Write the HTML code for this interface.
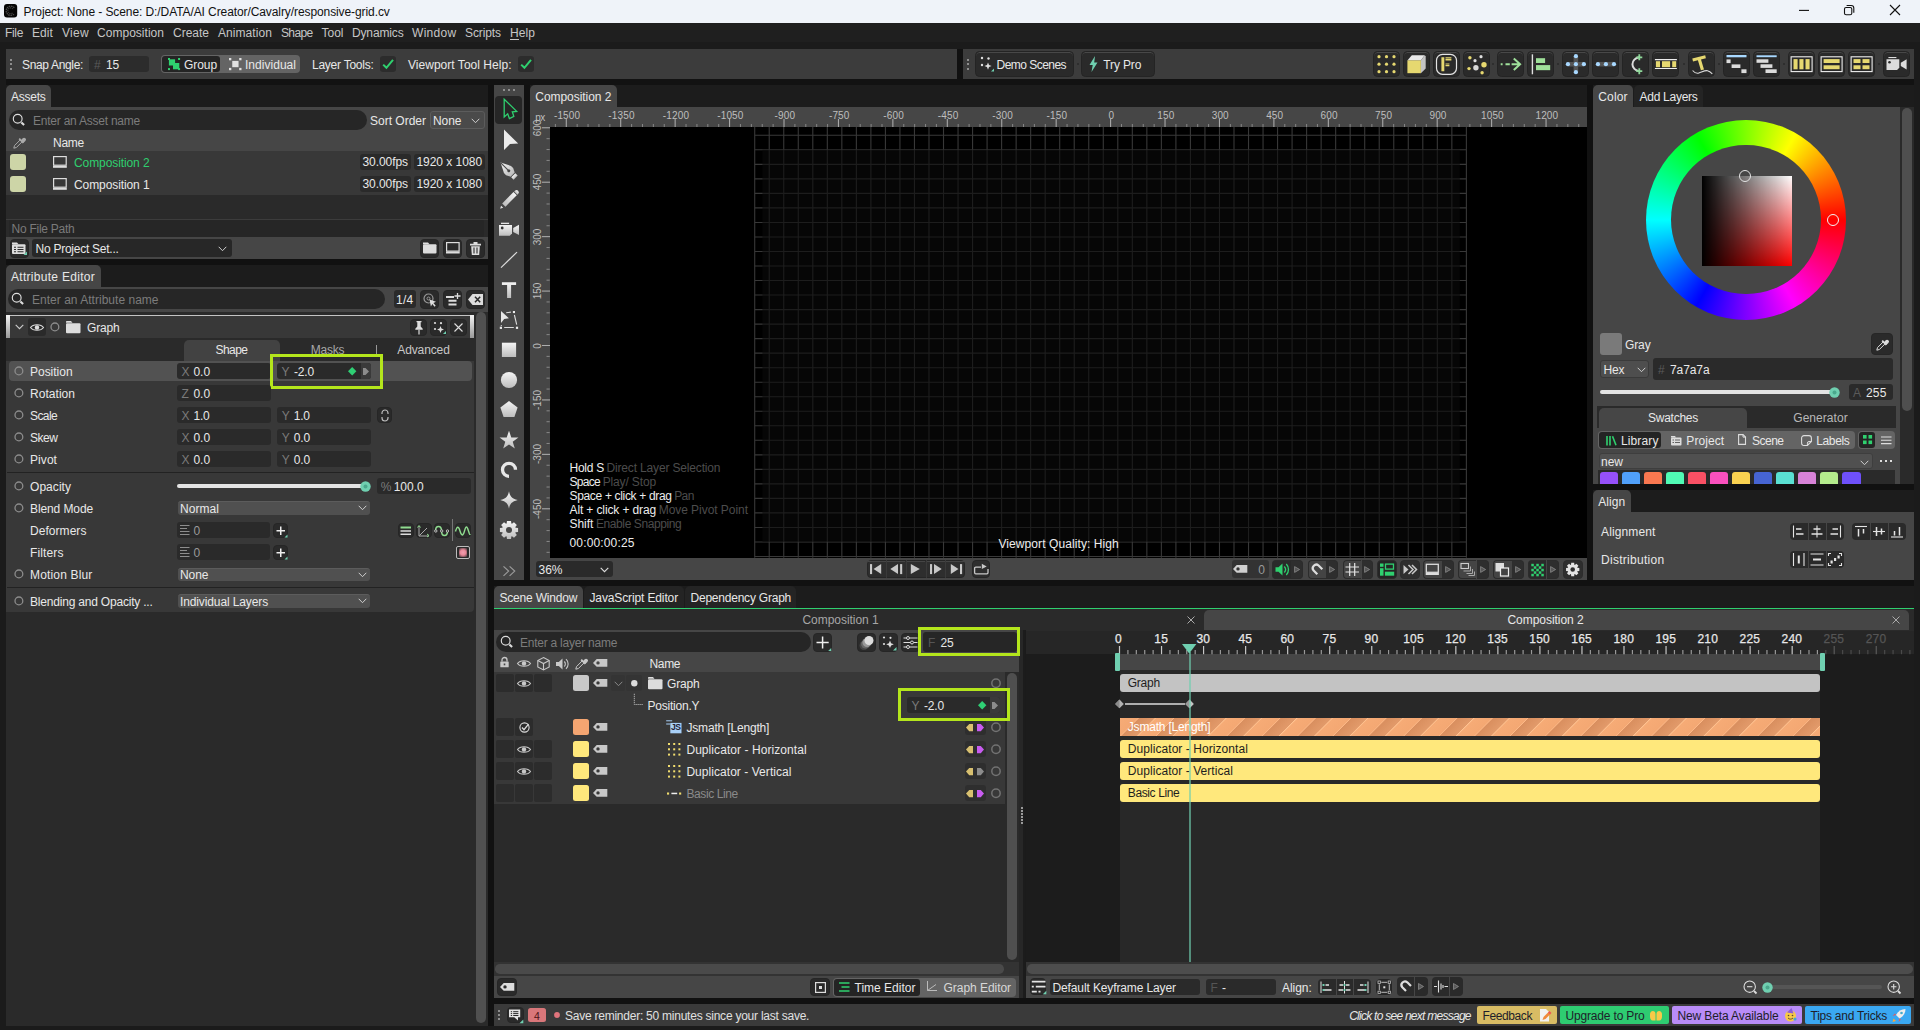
<!DOCTYPE html>
<html lang="en"><head><meta charset="utf-8"><title>Cavalry - responsive-grid.cv</title>
<style>
html,body{margin:0;padding:0}
body{width:1920px;height:1030px;overflow:hidden;position:relative;background:#1b1b1b;font-family:"Liberation Sans",Arial,sans-serif;font-size:12px;color:#e4e4e4}
div,svg{position:absolute;box-sizing:border-box}
svg{overflow:visible}
.t{white-space:nowrap}
</style></head><body>
<div style="left:0px;top:0px;width:1920px;height:22.7px;background:#eff3f9;"></div>
<svg style="left:3.6px;top:4.2px;" width="13.2" height="13.4" viewBox="0 0 13.2 13.4"><rect x="0" y="0" width="13.200" height="13.400" rx="3" fill="#050505"/><path d="M10.300 3.800A4.600 4.600 0 1 0 10.300 9.800" fill="none" stroke="#4a4a4a" stroke-width="1.300" stroke-dasharray="1.500 .700"/><path d="M9 5A2.900 2.900 0 1 0 9 8.600" fill="none" stroke="#3c3c3c" stroke-width="1.100" stroke-dasharray="1.300 .700"/></svg>
<div class="t" style="left:23.5px;top:1.5px;line-height:20px;color:#111;letter-spacing:-0.09px;">Project: None - Scene: D:/DATA/AI Creator/Cavalry/responsive-grid.cv</div>
<svg style="left:1790px;top:0px;" width="120" height="23" viewBox="0 0 120 23"><path d="M9 10.400h10" stroke="#111" stroke-width="1.100"/><rect x="54.500" y="7.500" width="7.300" height="7.300" rx="1.600" fill="none" stroke="#111" stroke-width="1.100"/><path d="M56.600 5.500h4.600a2.600 2.600 0 0 1 2.600 2.600v4.700" fill="none" stroke="#111" stroke-width="1.100"/><path d="M100 5l10 10M110 5l-10 10" stroke="#111" stroke-width="1.100"/></svg>
<div style="left:0px;top:22.7px;width:1920px;height:19.8px;background:#1f1f1f;"></div>
<div class="t" style="left:5px;top:23px;line-height:20px;color:#c6c6c6;letter-spacing:-0.34px;">File</div>
<div class="t" style="left:32px;top:23px;line-height:20px;color:#c6c6c6;letter-spacing:0.08px;">Edit</div>
<div class="t" style="left:62px;top:23px;line-height:20px;color:#c6c6c6;letter-spacing:0.3px;">View</div>
<div class="t" style="left:97px;top:23px;line-height:20px;color:#c6c6c6;letter-spacing:0.03px;">Composition</div>
<div class="t" style="left:173px;top:23px;line-height:20px;color:#c6c6c6;">Create</div>
<div class="t" style="left:218px;top:23px;line-height:20px;color:#c6c6c6;letter-spacing:0.07px;">Animation</div>
<div class="t" style="left:281px;top:23px;line-height:20px;color:#c6c6c6;letter-spacing:-0.64px;">Shape</div>
<div class="t" style="left:321.5px;top:23px;line-height:20px;color:#c6c6c6;">Tool</div>
<div class="t" style="left:352px;top:23px;line-height:20px;color:#c6c6c6;letter-spacing:-0.15px;">Dynamics</div>
<div class="t" style="left:412px;top:23px;line-height:20px;color:#c6c6c6;letter-spacing:0.3px;">Window</div>
<div class="t" style="left:465px;top:23px;line-height:20px;color:#c6c6c6;letter-spacing:-0.1px;">Scripts</div>
<div class="t" style="left:510px;top:23px;line-height:20px;color:#c6c6c6;letter-spacing:0.08px;">Help</div>
<div style="left:510px;top:39px;width:8.5px;height:1px;background:#c6c6c6;"></div>
<div style="left:6px;top:49px;width:951px;height:30px;background:#3c3c3c;"></div>
<div style="left:10px;top:58.7px;width:2px;height:2px;background:#8e8e8e;"></div>
<div style="left:10px;top:63.2px;width:2px;height:2px;background:#8e8e8e;"></div>
<div style="left:10px;top:67.7px;width:2px;height:2px;background:#8e8e8e;"></div>
<div class="t" style="left:22px;top:54.8px;line-height:20px;color:#e8e8e8;letter-spacing:-0.34px;">Snap Angle:</div>
<div style="left:89px;top:56px;width:59.5px;height:16px;background:#2c2c2c;border-radius:3px;"></div>
<div class="t" style="left:94px;top:54.8px;line-height:20px;color:#5a5a5a;letter-spacing:-0.67px;">#</div>
<div class="t" style="left:106px;top:54.8px;line-height:20px;color:#e8e8e8;letter-spacing:-0.17px;">15</div>
<div style="left:161px;top:55px;width:139px;height:18px;background:#646464;border-radius:4px;"></div>
<div style="left:162px;top:56px;width:58px;height:16px;background:#242424;border-radius:3px;"></div>
<svg style="left:167.9px;top:57.9px;" width="12.2" height="12.2" viewBox="0 0 12.2 12.2"><g fill="#2fd16f"><rect x="0.900" y="1.300" width="6.200" height="6.200"/><rect x="5" y="5" width="6.300" height="6.300"/><rect x="0" y="0" width="2" height="2"/><rect x="10.100" y="0" width="2" height="2"/><rect x="0" y="10.100" width="2" height="2"/><rect x="10.100" y="10.100" width="2" height="2"/></g></svg>
<div class="t" style="left:184px;top:54.8px;line-height:20px;color:#e8e8e8;letter-spacing:-0.07px;">Group</div>
<svg style="left:228.75px;top:57.9px;" width="12.5" height="12.2" viewBox="0 0 12.5 12.2"><g fill="#e0e0e0"><rect x="3.250" y="2.900" width="6.300" height="6.300"/><rect x="0" y="0" width="2.300" height="2.300"/><rect x="10.200" y="0" width="2.300" height="2.300"/><rect x="0" y="9.900" width="2.300" height="2.300"/><rect x="10.200" y="9.900" width="2.300" height="2.300"/></g></svg>
<div class="t" style="left:245px;top:54.8px;line-height:20px;color:#e8e8e8;letter-spacing:0.03px;">Individual</div>
<div class="t" style="left:312px;top:54.8px;line-height:20px;color:#e8e8e8;letter-spacing:-0.25px;">Layer Tools:</div>
<div style="left:380px;top:56px;width:16px;height:16px;background:#2c2c2c;border-radius:3px;"></div>
<svg style="left:380px;top:56px;" width="16" height="16" viewBox="0 0 16 16"><path d="M3.2 8.6l3.2 3.2 6.6-8" fill="none" stroke="#2fd16f" stroke-width="2"/></svg>
<div class="t" style="left:408px;top:54.8px;line-height:20px;color:#e8e8e8;letter-spacing:0.03px;">Viewport Tool Help:</div>
<div style="left:517.5px;top:56px;width:16px;height:16px;background:#2c2c2c;border-radius:3px;"></div>
<svg style="left:517.5px;top:56px;" width="16" height="16" viewBox="0 0 16 16"><path d="M3.2 8.6l3.2 3.2 6.6-8" fill="none" stroke="#2fd16f" stroke-width="2"/></svg>
<div style="left:957px;top:49px;width:6px;height:30px;background:#111;"></div>
<div style="left:963px;top:49px;width:951px;height:30px;background:#3c3c3c;"></div>
<div style="left:967px;top:58.7px;width:2px;height:2px;background:#8e8e8e;"></div>
<div style="left:967px;top:63.2px;width:2px;height:2px;background:#8e8e8e;"></div>
<div style="left:967px;top:67.7px;width:2px;height:2px;background:#8e8e8e;"></div>
<div style="left:974.5px;top:50.8px;width:99.5px;height:26.7px;background:#2a2a2a;border-radius:4.5px;border:1px solid #242424;box-shadow:inset 0 1px 0 #484848;"></div>
<svg style="left:980px;top:56px;" width="14" height="16" viewBox="0 0 14 16"><g fill="#e0e0e0"><circle cx="2" cy="2" r="1.2"/><circle cx="8.5" cy="2.5" r="1.2"/><circle cx="2" cy="9" r="1.2"/><path d="M8 6.5l1 2.6 2.6 1-2.6 1-1 2.6-1-2.6-2.6-1 2.6-1z"/></g><path d="M14 12.5v3h-3z" fill="#6fcfb0"/></svg>
<div class="t" style="left:996.5px;top:54.8px;line-height:20px;color:#e8e8e8;letter-spacing:-0.53px;">Demo Scenes</div>
<div style="left:1076.5px;top:63px;width:2px;height:2px;background:#2a2a2a;border-radius:1px;"></div>
<div style="left:1081.3px;top:50.8px;width:74px;height:26.7px;background:#2a2a2a;border-radius:4.5px;border:1px solid #242424;box-shadow:inset 0 1px 0 #484848;"></div>
<svg style="left:1089px;top:56px;" width="9" height="16" viewBox="0 0 9 16"><path d="M6 0L0.5 9h3.2L2.5 16 8.5 6.5H5.2z" fill="#6fcfb0"/></svg>
<div class="t" style="left:1103.3px;top:54.8px;line-height:20px;color:#e8e8e8;letter-spacing:-0.13px;">Try Pro</div>
<div style="left:1372.5px;top:50.8px;width:27px;height:26.7px;background:#2a2a2a;border-radius:4.5px;border:1px solid #242424;box-shadow:inset 0 1px 0 #484848;"></div>
<svg style="left:1372.5px;top:50.8px;" width="27" height="26.7" viewBox="0 0 27 26.7"><circle cx="6" cy="5.7" r="1.600" fill="#e6d870"/><circle cx="6" cy="13.2" r="1.600" fill="#e6d870"/><circle cx="6" cy="20.7" r="1.600" fill="#e6d870"/><circle cx="13.5" cy="5.7" r="1.600" fill="#e6d870"/><circle cx="13.5" cy="13.2" r="1.600" fill="#e6d870"/><circle cx="13.5" cy="20.7" r="1.600" fill="#e6d870"/><circle cx="21" cy="5.7" r="1.600" fill="#e6d870"/><circle cx="21" cy="13.2" r="1.600" fill="#e6d870"/><circle cx="21" cy="20.7" r="1.600" fill="#e6d870"/></svg>
<div style="left:1402.5px;top:50.8px;width:27px;height:26.7px;background:#2a2a2a;border-radius:4.5px;border:1px solid #242424;box-shadow:inset 0 1px 0 #484848;"></div>
<svg style="left:1402.5px;top:50.8px;" width="27" height="26.7" viewBox="0 0 27 26.7"><path d="M4.400 9.400l4.400-5.100h12.900l-3.800 5.100z" fill="#e8e8e8"/><path d="M17.900 9.400l3.800-5.100 1 1v12.200l-4.800 4.700z" fill="#c4c4c4"/><rect x="4.400" y="9.400" width="13.500" height="12.800" fill="#e6d870"/></svg>
<div style="left:1432.5px;top:50.8px;width:27px;height:26.7px;background:#2a2a2a;border-radius:4.5px;border:1px solid #242424;box-shadow:inset 0 1px 0 #484848;"></div>
<svg style="left:1432.5px;top:50.8px;" width="27" height="26.7" viewBox="0 0 27 26.7"><rect x="3.500" y="3.300" width="20" height="20" rx="6" fill="none" stroke="#e4e4e4" stroke-width="1.200"/><path d="M8.400 6.300h2.900v13.900H8.400zM12.500 6.300h5.900v1.300h-5.900zM12.500 8.100h5.900v1.300h-5.900zM12.500 12.400h3.900v1.200h-3.900zM12.500 14h3.900v1.200h-3.900z" fill="#e6d870"/></svg>
<div style="left:1462.5px;top:50.8px;width:27px;height:26.7px;background:#2a2a2a;border-radius:4.5px;border:1px solid #242424;box-shadow:inset 0 1px 0 #484848;"></div>
<svg style="left:1462.5px;top:50.8px;" width="27" height="26.7" viewBox="0 0 27 26.7"><circle cx="6.900" cy="6.700" r="1.700" fill="#e6d870"/><circle cx="18" cy="5.700" r="1.600" fill="#e0e0e0"/><circle cx="12" cy="9.700" r="1.600" fill="#e0e0e0"/><circle cx="21" cy="13.700" r="2.700" fill="#e6d870"/><circle cx="12.900" cy="16.700" r="2.700" fill="#d8d8d8"/><circle cx="6" cy="17.600" r="1.700" fill="#e6d870"/><circle cx="19.100" cy="21.700" r="1.700" fill="#e6d870"/></svg>
<div style="left:1497px;top:50.8px;width:27px;height:26.7px;background:#2a2a2a;border-radius:4.5px;border:1px solid #242424;box-shadow:inset 0 1px 0 #484848;"></div>
<svg style="left:1497px;top:50.8px;" width="27" height="26.7" viewBox="0 0 27 26.7"><path d="M3.700 13.200h1.900M8.500 13.200h4.300" stroke="#9fe09a" stroke-width="1.900"/><path d="M14.600 13.200h8.200M16.800 7.400l6.300 5.800-6.300 5.900" fill="none" stroke="#9fe09a" stroke-width="2"/></svg>
<div style="left:1527px;top:50.8px;width:27px;height:26.7px;background:#2a2a2a;border-radius:4.5px;border:1px solid #242424;box-shadow:inset 0 1px 0 #484848;"></div>
<svg style="left:1527px;top:50.8px;" width="27" height="26.7" viewBox="0 0 27 26.7"><path d="M5.400 3.300v20" stroke="#e0e0e0" stroke-width="1.400"/><rect x="9" y="7.200" width="9.100" height="4.800" fill="#9fe09a"/><rect x="9" y="14.100" width="14.200" height="5.100" fill="#9fe09a"/></svg>
<div style="left:1562px;top:50.8px;width:27px;height:26.7px;background:#2a2a2a;border-radius:4.5px;border:1px solid #242424;box-shadow:inset 0 1px 0 #484848;"></div>
<svg style="left:1562px;top:50.8px;" width="27" height="26.7" viewBox="0 0 27 26.7"><path d="M13.900 5.200v16M5.900 13.200h16" stroke="#555" stroke-width="4.600"/><circle cx="13.9" cy="5.2" r="2.100" fill="#a8d8ff"/><circle cx="13.9" cy="13.2" r="2.100" fill="#a8d8ff"/><circle cx="13.9" cy="21.2" r="2.100" fill="#a8d8ff"/><circle cx="5.9" cy="13.2" r="2.100" fill="#a8d8ff"/><circle cx="21.9" cy="13.2" r="2.100" fill="#a8d8ff"/></svg>
<div style="left:1592px;top:50.8px;width:27px;height:26.7px;background:#2a2a2a;border-radius:4.5px;border:1px solid #242424;box-shadow:inset 0 1px 0 #484848;"></div>
<svg style="left:1592px;top:50.8px;" width="27" height="26.7" viewBox="0 0 27 26.7"><path d="M5.900 13.200h16.100" stroke="#555" stroke-width="4.600"/><circle cx="5.9" cy="13.200" r="2.100" fill="#a8d8ff"/><circle cx="13.9" cy="13.200" r="2.100" fill="#a8d8ff"/><circle cx="22" cy="13.200" r="2.100" fill="#a8d8ff"/></svg>
<div style="left:1622px;top:50.8px;width:27px;height:26.7px;background:#2a2a2a;border-radius:4.5px;border:1px solid #242424;box-shadow:inset 0 1px 0 #484848;"></div>
<svg style="left:1622px;top:50.8px;" width="27" height="26.7" viewBox="0 0 27 26.7"><path d="M17.300 6.300A7.800 7 0 0 0 17.300 20.200" fill="none" stroke="#dcdcdc" stroke-width="2"/><path d="M17.300 3.300v6M14.300 6.300h6M17.300 17.200v6M14.300 20.200h6" stroke="#8fd89a" stroke-width="1.800"/></svg>
<div style="left:1652px;top:50.8px;width:27px;height:26.7px;background:#2a2a2a;border-radius:4.5px;border:1px solid #242424;box-shadow:inset 0 1px 0 #484848;"></div>
<svg style="left:1652px;top:50.8px;" width="27" height="26.7" viewBox="0 0 27 26.7"><path d="M2.900 8.600h22M2.900 17.500h22" stroke="#eee" stroke-width="1.200"/><rect x="3.900" y="10.200" width="4.100" height="6" fill="#e6d870"/><rect x="10" y="10.200" width="8.100" height="6" fill="#e6d870"/><rect x="20.200" y="10.200" width="4" height="6" fill="#e6d870"/></svg>
<div style="left:1687.5px;top:50.8px;width:27px;height:26.7px;background:#2a2a2a;border-radius:4.5px;border:1px solid #242424;box-shadow:inset 0 1px 0 #484848;"></div>
<svg style="left:1687.5px;top:50.8px;" width="27" height="26.7" viewBox="0 0 27 26.7"><path d="M4.300 7.400L17.200 4.300l.7 2.900-4.900 1.200 3 10-3.100.9-3-10.100-4.900 1.200z" fill="#e6d870"/><path d="M4.600 19.500c2 2.400 3.800 3.200 6.300 2.500s6-2.800 8.600-2.300c2 .4 3.300 1.600 4.800 3.200" fill="none" stroke="#dcdcdc" stroke-width="1.100"/></svg>
<div style="left:1722.5px;top:50.8px;width:27px;height:26.7px;background:#2a2a2a;border-radius:4.5px;border:1px solid #242424;box-shadow:inset 0 1px 0 #484848;"></div>
<svg style="left:1722.5px;top:50.8px;" width="27" height="26.7" viewBox="0 0 27 26.7"><rect x="3.500" y="4" width="20" height="2.300" fill="#a8d8ff"/><rect x="3.500" y="8.400" width="4.100" height="3.700" fill="#dcdcdc"/><rect x="8.600" y="13.400" width="8.800" height="3.600" fill="#dcdcdc"/><rect x="18.400" y="18.300" width="5.100" height="3.800" fill="#dcdcdc"/></svg>
<div style="left:1752.5px;top:50.8px;width:27px;height:26.7px;background:#2a2a2a;border-radius:4.5px;border:1px solid #242424;box-shadow:inset 0 1px 0 #484848;"></div>
<svg style="left:1752.5px;top:50.8px;" width="27" height="26.7" viewBox="0 0 27 26.7"><rect x="3.500" y="4.300" width="20.200" height="1.900" fill="#a8d8ff"/><rect x="3.500" y="8.300" width="11.900" height="3.500" fill="#dcdcdc"/><rect x="7.500" y="13.300" width="11.900" height="3.600" fill="#dcdcdc"/><rect x="12.500" y="18.300" width="11.200" height="3.700" fill="#dcdcdc"/></svg>
<div style="left:1787.5px;top:50.8px;width:27px;height:26.7px;background:#2a2a2a;border-radius:4.5px;border:1px solid #242424;box-shadow:inset 0 1px 0 #484848;"></div>
<svg style="left:1787.5px;top:50.8px;" width="27" height="26.7" viewBox="0 0 27 26.7"><rect x="3.100" y="5.800" width="21" height="14.800" fill="none" stroke="#eee" stroke-width="1.100"/><rect x="5.5" y="8.100" width="4.100" height="10.200" fill="#e6d870"/><rect x="11.4" y="8.100" width="4.100" height="10.200" fill="#e6d870"/><rect x="17.5" y="8.100" width="4.100" height="10.200" fill="#e6d870"/></svg>
<div style="left:1817.5px;top:50.8px;width:27px;height:26.7px;background:#2a2a2a;border-radius:4.5px;border:1px solid #242424;box-shadow:inset 0 1px 0 #484848;"></div>
<svg style="left:1817.5px;top:50.8px;" width="27" height="26.7" viewBox="0 0 27 26.7"><rect x="3.100" y="5.800" width="21" height="14.800" fill="none" stroke="#eee" stroke-width="1.100"/><rect x="5.600" y="8.1" width="16" height="3.900" fill="#e6d870"/><rect x="5.600" y="14.3" width="16" height="3.900" fill="#e6d870"/></svg>
<div style="left:1847.5px;top:50.8px;width:27px;height:26.7px;background:#2a2a2a;border-radius:4.5px;border:1px solid #242424;box-shadow:inset 0 1px 0 #484848;"></div>
<svg style="left:1847.5px;top:50.8px;" width="27" height="26.7" viewBox="0 0 27 26.7"><rect x="3.100" y="5.800" width="21" height="14.800" fill="none" stroke="#eee" stroke-width="1.100"/><rect x="5.5" y="8.1" width="7" height="3.900" fill="#e6d870"/><rect x="5.5" y="14.3" width="7" height="3.900" fill="#e6d870"/><rect x="14.5" y="8.1" width="7" height="3.900" fill="#e6d870"/><rect x="14.5" y="14.3" width="7" height="3.900" fill="#e6d870"/></svg>
<div style="left:1882.5px;top:50.8px;width:27px;height:26.7px;background:#2a2a2a;border-radius:4.5px;border:1px solid #242424;box-shadow:inset 0 1px 0 #484848;"></div>
<svg style="left:1882.5px;top:50.8px;" width="27" height="26.7" viewBox="0 0 27 26.7"><rect x="5.400" y="6" width="8" height="1.100" fill="#dcdcdc"/><path d="M3.500 8.300h12.800v8.400l-2.200 2.200H3.500z" fill="#dcdcdc"/><path d="M17.800 11.800l5.800-3.500v10.200l-5.800-3.600z" fill="#dcdcdc"/><circle cx="6.500" cy="11.200" r="1.300" fill="#2a2a2a"/></svg>
<div style="left:1492.3px;top:63px;width:2px;height:2px;background:#2a2a2a;border-radius:1px;"></div>
<div style="left:1557.3px;top:63px;width:2px;height:2px;background:#2a2a2a;border-radius:1px;"></div>
<div style="left:1682.5px;top:63px;width:2px;height:2px;background:#2a2a2a;border-radius:1px;"></div>
<div style="left:1717.5px;top:63px;width:2px;height:2px;background:#2a2a2a;border-radius:1px;"></div>
<div style="left:1782.5px;top:63px;width:2px;height:2px;background:#2a2a2a;border-radius:1px;"></div>
<div style="left:1877.5px;top:63px;width:2px;height:2px;background:#2a2a2a;border-radius:1px;"></div>
<div style="left:6px;top:79px;width:1908px;height:6px;background:#121212;"></div>
<div style="left:488px;top:85px;width:6px;height:941px;background:#111111;"></div>
<div style="left:6px;top:259px;width:482px;height:6px;background:#111111;"></div>
<div style="left:6px;top:85px;width:482px;height:22px;background:#1c1c1c;"></div>
<div style="left:6px;top:85px;width:45px;height:22px;background:#464646;border-radius:5px 5px 0 0;"></div>
<div class="t" style="left:11px;top:86.5px;line-height:20px;color:#e8e8e8;letter-spacing:-0.25px;">Assets</div>
<div style="left:6px;top:107px;width:482px;height:152px;background:#464646;"></div>
<div style="left:9px;top:110px;width:358px;height:20px;background:#262626;border-radius:10px;"></div>
<svg style="left:12.3px;top:113.3px;" width="14" height="14" viewBox="0 0 14 14"><circle cx="5.7" cy="5.700" r="4.400" fill="none" stroke="#ddd" stroke-width="1.150"/><path d="M9.400 9.400l2.700 2.700" stroke="#ddd" stroke-width="2.100"/></svg>
<div class="t" style="left:33px;top:110.5px;line-height:20px;color:#7c7c7c;letter-spacing:-0.23px;">Enter an Asset name</div>
<div class="t" style="left:370px;top:110.5px;line-height:20px;color:#e8e8e8;">Sort Order</div>
<div style="left:430px;top:111px;width:54.5px;height:17.5px;background:#4a4a4a;border-radius:3px;border:1px solid #5c5c5c;"></div>
<div class="t" style="left:433px;top:110.5px;line-height:20px;color:#e8e8e8;letter-spacing:-0.05px;">None</div>
<svg style="left:471px;top:117.5px;" width="9" height="6" viewBox="0 0 9 6"><path d="M0.700 0.800l3.800 3.900 3.800-3.900" fill="none" stroke="#cfcfcf" stroke-width="1.0"/></svg>
<div style="left:6px;top:130.5px;width:482px;height:20px;background:#464646;"></div>
<svg style="left:13px;top:135.5px;" width="13" height="13" viewBox="0 0 13 13"><path d="M0.800 12.200l.7-2.600 5.800-5.800 1.900 1.900-5.800 5.800z" fill="none" stroke="#aaa" stroke-width="1"/><path d="M6.200 2.600l4.200 4.200" stroke="#aaa" stroke-width="1.800"/><path d="M8 4.200l1.700-1.900a1.900 1.900 0 0 1 2.700 2.700l-1.900 1.700z" fill="#aaa"/></svg>
<div class="t" style="left:53px;top:132.5px;line-height:20px;color:#e8e8e8;letter-spacing:-0.25px;">Name</div>
<div style="left:6px;top:150.5px;width:482px;height:44.5px;background:#383838;"></div>
<div style="left:10px;top:154px;width:16px;height:16px;background:#cdd5a7;border-radius:3px;"></div>
<svg style="left:53px;top:156px;" width="15" height="13" viewBox="0 0 15 13"><rect x="0.600" y="0.600" width="12.600" height="8.600" fill="none" stroke="#ddd" stroke-width="1.200"/><rect x="0" y="9.800" width="13.800" height="2" fill="#ddd"/></svg>
<div class="t" style="left:74px;top:152.5px;line-height:20px;color:#2fcf6f;letter-spacing:-0.09px;">Composition 2</div>
<div style="left:360px;top:154px;width:50.5px;height:16px;background:#2a2a2a;border-radius:3px;"></div>
<div class="t" style="left:362.5px;top:152px;line-height:20px;color:#e8e8e8;letter-spacing:-0.06px;">30.00fps</div>
<div style="left:414px;top:154px;width:70.5px;height:16px;background:#2a2a2a;border-radius:3px;"></div>
<div class="t" style="left:416.5px;top:152px;line-height:20px;color:#e8e8e8;letter-spacing:-0.05px;">1920 x 1080</div>
<div style="left:10px;top:176px;width:16px;height:16px;background:#cdd5a7;border-radius:3px;"></div>
<svg style="left:53px;top:178px;" width="15" height="13" viewBox="0 0 15 13"><rect x="0.600" y="0.600" width="12.600" height="8.600" fill="none" stroke="#ddd" stroke-width="1.200"/><rect x="0" y="9.800" width="13.800" height="2" fill="#ddd"/></svg>
<div class="t" style="left:74px;top:174.5px;line-height:20px;color:#e8e8e8;letter-spacing:-0.09px;">Composition 1</div>
<div style="left:360px;top:176px;width:50.5px;height:16px;background:#2a2a2a;border-radius:3px;"></div>
<div class="t" style="left:362.5px;top:174px;line-height:20px;color:#e8e8e8;letter-spacing:-0.06px;">30.00fps</div>
<div style="left:414px;top:176px;width:70.5px;height:16px;background:#2a2a2a;border-radius:3px;"></div>
<div class="t" style="left:416.5px;top:174px;line-height:20px;color:#e8e8e8;letter-spacing:-0.05px;">1920 x 1080</div>
<div style="left:6px;top:195px;width:482px;height:23px;background:#2a2a2a;"></div>
<div style="left:6px;top:218px;width:482px;height:19px;background:#2a2a2a;"></div>
<div style="left:6px;top:218.7px;width:482px;height:1px;background:#3c3c3c;"></div>
<div style="left:9px;top:220px;width:475px;height:16.5px;background:#262626;border-radius:2px;"></div>
<div class="t" style="left:11.5px;top:218.5px;line-height:20px;color:#7a7a7a;letter-spacing:-0.25px;">No File Path</div>
<div style="left:6px;top:237px;width:482px;height:22px;background:#464646;"></div>
<div style="left:9.5px;top:238.5px;width:19px;height:19px;background:#2a2a2a;border-radius:4px;border:1px solid #262626;"></div>
<svg style="left:12px;top:241px;" width="15" height="14" viewBox="0 0 15 14"><path d="M0 1.500h5l1.500 1.800H0z" fill="#ddd"/><rect x="0" y="3.300" width="13.500" height="9.700" rx="1" fill="#ddd"/><path d="M2 6.200h2M5.500 6.200h6M2 8.500h2M5.500 8.500h6M2 10.800h2M5.500 10.800h6" stroke="#2a2a2a" stroke-width="1.100"/><path d="M15 10.500v3.500h-3.500z" fill="#6fcfb0"/></svg>
<div style="left:32px;top:239px;width:199.5px;height:18px;background:#272727;border-radius:3px;"></div>
<div class="t" style="left:35.5px;top:238.5px;line-height:20px;color:#e8e8e8;letter-spacing:-0.25px;">No Project Set...</div>
<svg style="left:218px;top:246px;" width="9" height="6" viewBox="0 0 9 6"><path d="M0.700 0.800l3.800 3.900 3.800-3.900" fill="none" stroke="#cfcfcf" stroke-width="1.0"/></svg>
<div style="left:420px;top:238.5px;width:19px;height:19px;background:#2a2a2a;border-radius:4px;border:1px solid #262626;"></div>
<div style="left:443px;top:238.5px;width:19px;height:19px;background:#2a2a2a;border-radius:4px;border:1px solid #262626;"></div>
<div style="left:466px;top:238.5px;width:19px;height:19px;background:#2a2a2a;border-radius:4px;border:1px solid #262626;"></div>
<svg style="left:423px;top:242px;" width="14" height="12" viewBox="0 0 14 12"><path d="M0 0.500h5l1.500 1.800H0z" fill="#ddd"/><rect x="0" y="2.300" width="13.500" height="9.200" rx="1" fill="#ddd"/></svg>
<svg style="left:446px;top:242px;" width="14" height="12" viewBox="0 0 14 12"><rect x="0.600" y="0.600" width="12.500" height="8.500" fill="none" stroke="#ddd" stroke-width="1.200"/><rect x="0" y="9.500" width="13.700" height="2" fill="#ddd"/></svg>
<svg style="left:470px;top:241.5px;" width="11" height="13" viewBox="0 0 11 13"><path d="M0 1.800h11v1.600H0zM3.500 0h4v1.800h-4z" fill="#ddd"/><path d="M1.200 4.200h8.600l-.6 8.800H1.800z" fill="#ddd"/><path d="M4 5.500v6M7 5.500v6" stroke="#2a2a2a" stroke-width="1.100"/></svg>
<div style="left:6px;top:265px;width:482px;height:22px;background:#1c1c1c;"></div>
<div style="left:6px;top:265px;width:94.5px;height:22px;background:#464646;border-radius:5px 5px 0 0;"></div>
<div class="t" style="left:11px;top:266.5px;line-height:20px;color:#e8e8e8;letter-spacing:0.29px;">Attribute Editor</div>
<div style="left:6px;top:287px;width:482px;height:739px;background:#2a2a2a;"></div>
<div style="left:6px;top:287px;width:482px;height:25px;background:#464646;"></div>
<div style="left:8px;top:289px;width:377px;height:20px;background:#262626;border-radius:10px;"></div>
<svg style="left:11.3px;top:292.3px;" width="14" height="14" viewBox="0 0 14 14"><circle cx="5.7" cy="5.700" r="4.400" fill="none" stroke="#ddd" stroke-width="1.150"/><path d="M9.400 9.400l2.700 2.700" stroke="#ddd" stroke-width="2.100"/></svg>
<div class="t" style="left:32px;top:289.5px;line-height:20px;color:#7c7c7c;letter-spacing:0.02px;">Enter an Attribute name</div>
<div style="left:393.5px;top:289.5px;width:22.5px;height:18.5px;background:#2a2a2a;border-radius:3px;"></div>
<div class="t" style="left:396.05px;top:289.5px;line-height:20px;color:#e8e8e8;letter-spacing:0.28px;">1/4</div>
<div style="left:420px;top:289.5px;width:19px;height:19px;background:#2a2a2a;border-radius:4px;border:1px solid #262626;"></div>
<div style="left:443px;top:289.5px;width:19px;height:19px;background:#2a2a2a;border-radius:4px;border:1px solid #262626;"></div>
<div style="left:466px;top:289.5px;width:19px;height:19px;background:#2a2a2a;border-radius:4px;border:1px solid #262626;"></div>
<svg style="left:423px;top:292.5px;" width="14" height="14" viewBox="0 0 14 14"><circle cx="5.500" cy="5.500" r="4.500" fill="none" stroke="#999" stroke-width="1.200"/><circle cx="5.500" cy="5.500" r="1.500" fill="none" stroke="#999" stroke-width="1"/><path d="M6.500 6.500l6.500 2.300-2.600 1.300 2.300 2.600-1.200 1-2.200-2.600-1.400 2.300z" fill="#ddd"/></svg>
<svg style="left:446px;top:293px;" width="14" height="13" viewBox="0 0 14 13"><path d="M0 3h8v2H0zM2.500 6.800h8v2h-8zM2.500 10.600h8v2h-8z" fill="#ddd"/><path d="M11.500 0v6M8.500 3h6" stroke="#ddd" stroke-width="1.300"/></svg>
<svg style="left:468px;top:293.5px;" width="15" height="11" viewBox="0 0 15 11"><path d="M0 5.500L4.500 0H15v11H4.500z" fill="#ddd"/><path d="M7 2.800l5.200 5.400M12.200 2.800L7 8.200" stroke="#2a2a2a" stroke-width="1.500"/></svg>
<div style="left:476.2px;top:312.2px;width:9.8px;height:710.6px;background:#505050;border-radius:4.9px;"></div>
<div style="left:6px;top:315px;width:467.5px;height:23px;background:#383838;"></div>
<div style="left:6px;top:315px;width:467.5px;height:1.2px;background:#c4c4c4;"></div>
<div style="left:6px;top:315px;width:4px;height:23px;background:linear-gradient(#f4f4f4,#9a9a9a);"></div>
<div style="left:469.5px;top:315px;width:4px;height:23px;background:linear-gradient(#f4f4f4,#9a9a9a);"></div>
<svg style="left:14.5px;top:324px;" width="9" height="6" viewBox="0 0 9 6"><path d="M0.700 0.800l3.800 3.900 3.800-3.900" fill="none" stroke="#ccc" stroke-width="1.100"/></svg>
<div style="left:28px;top:318px;width:18px;height:18px;background:#2a2a2a;border-radius:3px;"></div>
<svg style="left:30px;top:323px;" width="14" height="9" viewBox="0 0 14 9"><path d="M0.500 4.500C3 0.800 11 0.800 13.500 4.500 11 8.200 3 8.200 0.500 4.500z" fill="none" stroke="#ddd" stroke-width="1.100"/><circle cx="7" cy="4.500" r="2.200" fill="#ddd"/></svg>
<svg style="left:49.9px;top:322.4px;" width="9.8" height="9.8" viewBox="0 0 9.8 9.8"><circle cx="4.9" cy="4.9" r="3.9" fill="none" stroke="#8c8c8c" stroke-width="1.3"/></svg>
<svg style="left:66px;top:320.5px;" width="15" height="12.5" viewBox="0 0 15 12.5"><path d="M0 0.800q0-.8.800-.8h4.200l1.500 1.800H0z" fill="#ddd"/><rect x="0" y="2.300" width="14.500" height="10" rx="1" fill="#ddd"/></svg>
<div class="t" style="left:87px;top:318px;line-height:20px;color:#e8e8e8;letter-spacing:-0.17px;">Graph</div>
<div style="left:409.5px;top:318.5px;width:17.5px;height:17.5px;background:#2a2a2a;border-radius:4px;border:1px solid #262626;"></div>
<div style="left:429.5px;top:318.5px;width:17.5px;height:17.5px;background:#2a2a2a;border-radius:4px;border:1px solid #262626;"></div>
<div style="left:449.5px;top:318.5px;width:17.5px;height:17.5px;background:#2a2a2a;border-radius:4px;border:1px solid #262626;"></div>
<svg style="left:413.5px;top:320.5px;" width="10" height="14" viewBox="0 0 10 14"><path d="M2.500 0h5v1.200h-.8v4.300l2 2.300v1H1.300v-1l2-2.300V1.200h-.8z" fill="#ddd"/><path d="M5 8.800v4.700" stroke="#ddd" stroke-width="1.200"/></svg>
<svg style="left:432.5px;top:321px;" width="13" height="13" viewBox="0 0 13 13"><g fill="#ddd"><circle cx="2" cy="2" r="1.100"/><circle cx="8" cy="2.200" r="1.100"/><circle cx="2" cy="8" r="1.100"/><path d="M7.500 5l1 2.500 2.500 1-2.500 1-1 2.500-1-2.500-2.500-1 2.500-1z"/></g><path d="M13 10v3h-3z" fill="#6fcfb0"/></svg>
<svg style="left:454px;top:323px;" width="9" height="9" viewBox="0 0 9 9"><path d="M0.500 0.500l8 8M8.500 0.500l-8 8" stroke="#ddd" stroke-width="1.100"/></svg>
<div style="left:6px;top:338px;width:467.5px;height:22.5px;background:#2a2a2a;"></div>
<div style="left:183.5px;top:340px;width:96px;height:20.5px;background:#424242;border-radius:5px 5px 0 0;"></div>
<div class="t" style="left:215.5px;top:340px;line-height:20px;color:#e8e8e8;letter-spacing:-0.54px;">Shape</div>
<div class="t" style="left:310.75px;top:340px;line-height:20px;color:#a8a8a8;letter-spacing:-0.23px;">Masks</div>
<div style="left:375.8px;top:345px;width:1px;height:9.5px;background:#9a9a9a;"></div>
<div class="t" style="left:397.25px;top:340px;line-height:20px;color:#c8c8c8;letter-spacing:-0.11px;">Advanced</div>
<div style="left:6px;top:360.5px;width:467.5px;height:251.5px;background:#383838;border-radius:0 0 4px 0;"></div>
<div style="left:9px;top:361px;width:463px;height:20px;background:#525252;border-radius:4px;"></div>
<svg style="left:14.1px;top:366.4px;" width="9.8" height="9.8" viewBox="0 0 9.8 9.8"><circle cx="4.9" cy="4.9" r="3.9" fill="none" stroke="#8c8c8c" stroke-width="1.3"/></svg>
<div class="t" style="left:30px;top:361.5px;line-height:20px;color:#e8e8e8;letter-spacing:-0.02px;">Position</div>
<svg style="left:14.1px;top:388.4px;" width="9.8" height="9.8" viewBox="0 0 9.8 9.8"><circle cx="4.9" cy="4.9" r="3.9" fill="none" stroke="#8c8c8c" stroke-width="1.3"/></svg>
<div class="t" style="left:30px;top:383.5px;line-height:20px;color:#e8e8e8;letter-spacing:0.04px;">Rotation</div>
<svg style="left:14.1px;top:410.4px;" width="9.8" height="9.8" viewBox="0 0 9.8 9.8"><circle cx="4.9" cy="4.9" r="3.9" fill="none" stroke="#8c8c8c" stroke-width="1.3"/></svg>
<div class="t" style="left:30px;top:405.5px;line-height:20px;color:#e8e8e8;letter-spacing:-0.6px;">Scale</div>
<svg style="left:14.1px;top:432.4px;" width="9.8" height="9.8" viewBox="0 0 9.8 9.8"><circle cx="4.9" cy="4.9" r="3.9" fill="none" stroke="#8c8c8c" stroke-width="1.3"/></svg>
<div class="t" style="left:30px;top:427.5px;line-height:20px;color:#e8e8e8;letter-spacing:-0.46px;">Skew</div>
<svg style="left:14.1px;top:454.4px;" width="9.8" height="9.8" viewBox="0 0 9.8 9.8"><circle cx="4.9" cy="4.9" r="3.9" fill="none" stroke="#8c8c8c" stroke-width="1.3"/></svg>
<div class="t" style="left:30px;top:449.5px;line-height:20px;color:#e8e8e8;letter-spacing:0.07px;">Pivot</div>
<div style="left:176.5px;top:363px;width:94.3px;height:15.5px;background:#2a2a2a;border-radius:3px;"></div>
<div class="t" style="left:181.5px;top:361.75px;line-height:20px;color:#7a7a7a;letter-spacing:-0.5px;">X</div>
<div class="t" style="left:193.5px;top:361.75px;line-height:20px;color:#e8e8e8;letter-spacing:-0.06px;">0.0</div>
<div style="left:276.7px;top:363px;width:94px;height:15.5px;background:#2a2a2a;border-radius:3px;"></div>
<div style="left:360.5px;top:363px;width:10.2px;height:15.5px;background:#3a3a3a;border-radius:0 3px 3px 0;"></div>
<div class="t" style="left:281.5px;top:361.8px;line-height:20px;color:#7a7a7a;letter-spacing:-0.5px;">Y</div>
<div class="t" style="left:294px;top:361.8px;line-height:20px;color:#e8e8e8;letter-spacing:-0.17px;">-2.0</div>
<svg style="left:348.3px;top:366.8px;" width="8.4" height="8.4" viewBox="0 0 8.4 8.4"><path d="M4.200 0l4.200 4.200-4.200 4.200L0 4.200z" fill="#2fcf74"/></svg>
<svg style="left:362.5px;top:367.5px;" width="6" height="7" viewBox="0 0 6 7"><path d="M0 0h2.500l3.500 3.500-3.500 3.500H0z" fill="#8c8c8c"/></svg>
<div style="left:270px;top:354px;width:112.5px;height:35px;border:3px solid #b4e61c;"></div>
<div style="left:176.5px;top:385px;width:94.3px;height:15.5px;background:#2a2a2a;border-radius:3px;"></div>
<div class="t" style="left:181.5px;top:383.75px;line-height:20px;color:#7a7a7a;letter-spacing:0.17px;">Z</div>
<div class="t" style="left:193.5px;top:383.75px;line-height:20px;color:#e8e8e8;letter-spacing:-0.06px;">0.0</div>
<div style="left:176.5px;top:407px;width:94.3px;height:15.5px;background:#2a2a2a;border-radius:3px;"></div>
<div class="t" style="left:181.5px;top:405.75px;line-height:20px;color:#7a7a7a;letter-spacing:-0.5px;">X</div>
<div class="t" style="left:193.5px;top:405.75px;line-height:20px;color:#e8e8e8;letter-spacing:-0.22px;">1.0</div>
<div style="left:276.7px;top:407px;width:94px;height:15.5px;background:#2a2a2a;border-radius:3px;"></div>
<div class="t" style="left:281.7px;top:405.75px;line-height:20px;color:#7a7a7a;letter-spacing:-0.5px;">Y</div>
<div class="t" style="left:293.7px;top:405.75px;line-height:20px;color:#e8e8e8;letter-spacing:-0.22px;">1.0</div>
<div style="left:376.7px;top:407px;width:15.5px;height:15.5px;background:#2a2a2a;border-radius:4px;border:1px solid #262626;"></div>
<svg style="left:380.5px;top:409.5px;" width="8" height="11" viewBox="0 0 8 11"><path d="M1 4V3a3 3 0 0 1 6 0v1M1 7v1a3 3 0 0 0 6 0V7" fill="none" stroke="#bbb" stroke-width="1.200"/></svg>
<div style="left:176.5px;top:429px;width:94.3px;height:15.5px;background:#2a2a2a;border-radius:3px;"></div>
<div class="t" style="left:181.5px;top:427.75px;line-height:20px;color:#7a7a7a;letter-spacing:-0.5px;">X</div>
<div class="t" style="left:193.5px;top:427.75px;line-height:20px;color:#e8e8e8;letter-spacing:-0.06px;">0.0</div>
<div style="left:276.7px;top:429px;width:94px;height:15.5px;background:#2a2a2a;border-radius:3px;"></div>
<div class="t" style="left:281.7px;top:427.75px;line-height:20px;color:#7a7a7a;letter-spacing:-0.5px;">Y</div>
<div class="t" style="left:293.7px;top:427.75px;line-height:20px;color:#e8e8e8;letter-spacing:-0.06px;">0.0</div>
<div style="left:176.5px;top:451px;width:94.3px;height:15.5px;background:#2a2a2a;border-radius:3px;"></div>
<div class="t" style="left:181.5px;top:449.75px;line-height:20px;color:#7a7a7a;letter-spacing:-0.5px;">X</div>
<div class="t" style="left:193.5px;top:449.75px;line-height:20px;color:#e8e8e8;letter-spacing:-0.06px;">0.0</div>
<div style="left:276.7px;top:451px;width:94px;height:15.5px;background:#2a2a2a;border-radius:3px;"></div>
<div class="t" style="left:281.7px;top:449.75px;line-height:20px;color:#7a7a7a;letter-spacing:-0.5px;">Y</div>
<div class="t" style="left:293.7px;top:449.75px;line-height:20px;color:#e8e8e8;letter-spacing:-0.06px;">0.0</div>
<div style="left:6.5px;top:471.5px;width:467px;height:1.2px;background:#222;"></div>
<svg style="left:14.1px;top:481.4px;" width="9.8" height="9.8" viewBox="0 0 9.8 9.8"><circle cx="4.9" cy="4.9" r="3.9" fill="none" stroke="#8c8c8c" stroke-width="1.3"/></svg>
<div class="t" style="left:30px;top:476.5px;line-height:20px;color:#e8e8e8;letter-spacing:0.05px;">Opacity</div>
<div style="left:176.5px;top:484px;width:190px;height:4.3px;background:#e4e4e4;border-radius:2.2px;"></div>
<svg style="left:360px;top:480.5px;" width="11" height="11" viewBox="0 0 11 11"><circle cx="5.500" cy="5.500" r="5.200" fill="#6fcfb0"/><circle cx="5.500" cy="5.500" r="2" fill="#4aa88c"/></svg>
<div style="left:376.7px;top:478px;width:94.3px;height:15.5px;background:#2a2a2a;border-radius:3px;"></div>
<div class="t" style="left:380.7px;top:476.75px;line-height:20px;color:#7a7a7a;letter-spacing:-1.17px;">%</div>
<div class="t" style="left:393.7px;top:476.75px;line-height:20px;color:#e8e8e8;">100.0</div>
<svg style="left:14.1px;top:503.4px;" width="9.8" height="9.8" viewBox="0 0 9.8 9.8"><circle cx="4.9" cy="4.9" r="3.9" fill="none" stroke="#8c8c8c" stroke-width="1.3"/></svg>
<div class="t" style="left:30px;top:498.5px;line-height:20px;color:#e8e8e8;letter-spacing:-0.1px;">Blend Mode</div>
<div style="left:177.5px;top:501px;width:192.5px;height:13.8px;background:#505050;border-radius:3px;border-top:1px solid #5c5c5c;"></div>
<div class="t" style="left:180px;top:499.1px;line-height:20px;color:#e8e8e8;letter-spacing:0.05px;">Normal</div>
<svg style="left:357.5px;top:505.4px;" width="9" height="6" viewBox="0 0 9 6"><path d="M0.700 0.800l3.800 3.900 3.800-3.900" fill="none" stroke="#cfcfcf" stroke-width="1.0"/></svg>
<div class="t" style="left:30px;top:520.5px;line-height:20px;color:#e8e8e8;letter-spacing:0.05px;">Deformers</div>
<div style="left:176.5px;top:522px;width:93.5px;height:15.5px;background:#2a2a2a;border-radius:3px;"></div>
<svg style="left:179.5px;top:525px;" width="10" height="10" viewBox="0 0 10 10"><path d="M0 0.500h9.500M0 3.500h7M0 6.500h9.500M0 9.500h9.500" stroke="#999" stroke-width="0.9"/></svg>
<div class="t" style="left:193.5px;top:520.8px;line-height:20px;color:#9a9a9a;letter-spacing:0.33px;">0</div>
<div style="left:272.5px;top:522.5px;width:15.5px;height:15.5px;background:#2a2a2a;border-radius:4px;border:1px solid #262626;"></div>
<svg style="left:272.5px;top:522.5px;" width="15.5" height="15.5" viewBox="0 0 15.5 15.5"><path d="M7.75 3.500v8.5M3.500 7.75h8.5" stroke="#eee" stroke-width="1.500"/><path d="M14.5 11.5v3h-3z" fill="#6fcfb0"/></svg>
<div style="left:398px;top:522.5px;width:15.5px;height:15.5px;background:#2a2a2a;border-radius:4px;border:1px solid #262626;"></div>
<div style="left:416px;top:522.5px;width:15.5px;height:15.5px;background:#2a2a2a;border-radius:4px;border:1px solid #262626;"></div>
<div style="left:434px;top:522.5px;width:15.5px;height:15.5px;background:#2a2a2a;border-radius:4px;border:1px solid #262626;"></div>
<div style="left:455px;top:522.5px;width:15.5px;height:15.5px;background:#2a2a2a;border-radius:4px;border:1px solid #262626;"></div>
<svg style="left:398px;top:522.5px;" width="15.5" height="15.5" viewBox="0 0 15.5 15.5"><path d="M2.500 4.500h10.500" stroke="#8fdc8f" stroke-width="2"/><path d="M2.500 8h10.500M2.500 11.200h10.500" stroke="#ddd" stroke-width="1.500"/></svg>
<svg style="left:416px;top:522.5px;" width="15.5" height="15.5" viewBox="0 0 15.5 15.5"><path d="M3 3v10h10" fill="none" stroke="#aaa" stroke-width="1"/><path d="M3.500 12.500l7.500-7.500" stroke="#aaa" stroke-width="1"/><path d="M1.500 4.500L3 2.500l1.500 2M11 11l2 1.500-2 1.500" fill="none" stroke="#8fdc8f" stroke-width="1"/></svg>
<svg style="left:434px;top:522.5px;" width="15.5" height="15.5" viewBox="0 0 15.5 15.5"><path d="M1.500 8c0-6 6-6 6 0s6 6 6 0" fill="none" stroke="#8fdc8f" stroke-width="1.500"/><circle cx="1.800" cy="8" r="1.200" fill="#2a2a2a" stroke="#ddd" stroke-width=".8"/><circle cx="7.700" cy="8" r="1.200" fill="#2a2a2a" stroke="#ddd" stroke-width=".8"/><circle cx="13.500" cy="8" r="1.200" fill="#2a2a2a" stroke="#ddd" stroke-width=".8"/></svg>
<div style="left:451.5px;top:519px;width:1px;height:21.5px;background:#777;"></div>
<svg style="left:455px;top:522.5px;" width="15.5" height="15.5" viewBox="0 0 15.5 15.5"><path d="M0.500 8.500C2 3 3.500 3 5 8s3 5.500 4.500 0 2.500-5 4 0 1.500 3 1.500 3" fill="none" stroke="#8fdc8f" stroke-width="1.400"/></svg>
<div class="t" style="left:30px;top:542.5px;line-height:20px;color:#e8e8e8;letter-spacing:0.12px;">Filters</div>
<div style="left:176.5px;top:544px;width:93.5px;height:15.5px;background:#2a2a2a;border-radius:3px;"></div>
<svg style="left:179.5px;top:547px;" width="10" height="10" viewBox="0 0 10 10"><path d="M0 0.500h9.500M0 3.500h7M0 6.500h9.500M0 9.500h9.500" stroke="#999" stroke-width="0.9"/></svg>
<div class="t" style="left:193.5px;top:542.8px;line-height:20px;color:#9a9a9a;letter-spacing:0.33px;">0</div>
<div style="left:272.5px;top:544.5px;width:15.5px;height:15.5px;background:#2a2a2a;border-radius:4px;border:1px solid #262626;"></div>
<svg style="left:272.5px;top:544.5px;" width="15.5" height="15.5" viewBox="0 0 15.5 15.5"><path d="M7.75 3.500v8.5M3.500 7.75h8.5" stroke="#eee" stroke-width="1.500"/><path d="M14.5 11.5v3h-3z" fill="#6fcfb0"/></svg>
<div style="left:456px;top:545.5px;width:13.5px;height:13.5px;background:#2a2a2a;border-radius:2px;border:1px solid #bbb;"></div>
<div style="left:458.5px;top:548px;width:8.5px;height:8.5px;background:radial-gradient(circle,#f0a0b0 0%,#e88898 45%,#2a2a2a 100%);"></div>
<svg style="left:14.1px;top:569.4px;" width="9.8" height="9.8" viewBox="0 0 9.8 9.8"><circle cx="4.9" cy="4.9" r="3.9" fill="none" stroke="#8c8c8c" stroke-width="1.3"/></svg>
<div class="t" style="left:30px;top:564.5px;line-height:20px;color:#e8e8e8;letter-spacing:0.16px;">Motion Blur</div>
<div style="left:177.5px;top:567.5px;width:192.5px;height:13.5px;background:#505050;border-radius:3px;border-top:1px solid #5c5c5c;"></div>
<div class="t" style="left:180px;top:565.45px;line-height:20px;color:#e8e8e8;letter-spacing:-0.05px;">None</div>
<svg style="left:357.5px;top:571.75px;" width="9" height="6" viewBox="0 0 9 6"><path d="M0.700 0.800l3.800 3.900 3.800-3.900" fill="none" stroke="#cfcfcf" stroke-width="1.0"/></svg>
<div style="left:6.5px;top:587px;width:467px;height:1.2px;background:#222;"></div>
<svg style="left:14.1px;top:596.4px;" width="9.8" height="9.8" viewBox="0 0 9.8 9.8"><circle cx="4.9" cy="4.9" r="3.9" fill="none" stroke="#8c8c8c" stroke-width="1.3"/></svg>
<div class="t" style="left:30px;top:591.5px;line-height:20px;color:#e8e8e8;letter-spacing:-0.2px;">Blending and Opacity ...</div>
<div style="left:177.5px;top:594px;width:192.5px;height:13.5px;background:#505050;border-radius:3px;border-top:1px solid #5c5c5c;"></div>
<div class="t" style="left:180px;top:591.95px;line-height:20px;color:#e8e8e8;letter-spacing:-0.12px;">Individual Layers</div>
<svg style="left:357.5px;top:598.25px;" width="9" height="6" viewBox="0 0 9 6"><path d="M0.700 0.800l3.800 3.900 3.800-3.900" fill="none" stroke="#cfcfcf" stroke-width="1.0"/></svg>
<div style="left:493.5px;top:85px;width:30px;height:495px;background:#464646;"></div>
<div style="left:502.5px;top:89px;width:2px;height:2px;background:#8e8e8e;"></div>
<div style="left:507.7px;top:89px;width:2px;height:2px;background:#8e8e8e;"></div>
<div style="left:512.9px;top:89px;width:2px;height:2px;background:#8e8e8e;"></div>
<div style="left:495px;top:96px;width:27px;height:27.5px;background:#262626;border-radius:4px;"></div>
<svg width="0" height="0" style="left:0;top:0"><defs><linearGradient id="lg" x1="0" y1="0" x2="0" y2="1"><stop offset="0" stop-color="#f4f4f4"/><stop offset="1" stop-color="#bdbdbd"/></linearGradient></defs></svg>
<svg style="left:490px;top:85px;" width="40" height="500" viewBox="490 85 40 500"><path d="M504.2 99.200L516.700 111.400l-4.400.4 1.500 4.600-4.400 2.100-1.700-4.700-3.500 3.200z" fill="none" stroke="#2fcf6f" stroke-width="1.300"/><path d="M504 129.600L518.200 143.500l-8.200.6-6 5.900z" fill="#ececec"/><g transform="translate(508.200 170.200) rotate(-45)"><path d="M0 -10.800L5 -1v3L2.900 6.300h-5.800L-5 2v-3z" fill="url(#lg)"/><path d="M0 -10.500v10" stroke="#464646" stroke-width="1.100"/><circle cx="0" cy="0.800" r="1.500" fill="#464646"/><rect x="-2.900" y="7.200" width="5.800" height="3.300" fill="url(#lg)"/></g><g transform="translate(508.850 200) rotate(45)"><path d="M-2.300 -9.800v-1a2.300 2.300 0 0 1 4.600 0v1z" fill="url(#lg)"/><rect x="-2.300" y="-8.900" width="4.600" height="16" fill="url(#lg)"/><path d="M-1.500 9.500h3L0 12.500z" fill="url(#lg)"/></g><rect x="501" y="222.700" width="8.100" height="1.300" fill="#e6e6e6"/><path d="M499 225h13v8.500l-2.200 2.300H499z" fill="url(#lg)"/><path d="M513.200 228l5.800-3.200v10.200l-5.800-3z" fill="url(#lg)"/><circle cx="502.200" cy="228" r="1.400" fill="#333"/><path d="M501 267.600L517 252.100" stroke="#dcdcdc" stroke-width="1.200"/><path d="M501.900 282.200h14.200v2.700h-5v13h-4v-13h-5.200z" fill="url(#lg)"/><path d="M501 311l7.900 7.300-4.700.8-3.200 3.800z" fill="#e6e6e6"/><path d="M506.200 312.700l4.700-.6M514.400 315l2.300 9.700M504.200 327.500h9.600" stroke="#dcdcdc" stroke-width="1.100"/><rect x="512.900" y="311" width="2.100" height="2.100" fill="#eee"/><rect x="499.800" y="326.700" width="2.200" height="2.200" fill="#eee"/><rect x="515.900" y="326.700" width="2.200" height="2.200" fill="#eee"/><rect x="500.800" y="325" width="1" height="1" fill="#ddd"/><rect x="501.900" y="342.700" width="14.200" height="14.300" fill="url(#lg)"/><circle cx="509" cy="380" r="8.100" fill="url(#lg)"/><path d="M509 401l8.600 6.400-3.200 9.600h-10.800l-3.200-9.600z" fill="url(#lg)"/><polygon points="509,430.7 511.29,437.44 518.42,437.54 512.71,441.81 514.82,448.61 509,444.5 503.18,448.61 505.29,441.81 499.58,437.54 506.71,437.44" fill="url(#lg)"/><path d="M515.500 469.800A6.500 6.500 0 1 0 509 476.300" fill="none" stroke="#e8e8e8" stroke-width="3.300"/><path d="M509 491.200c.9 5 2.800 7.200 8.700 8.800-5.900 1.600-7.800 3.800-8.700 8.800-.9-5-2.800-7.200-8.700-8.800 5.900-1.600 7.800-3.800 8.700-8.800z" fill="url(#lg)"/><polygon points="515.59,527.63 518.08,527.97 518.08,532.03 515.59,532.37 515.33,532.98 516.85,534.98 513.98,537.85 511.98,536.33 511.37,536.59 511.03,539.08 506.97,539.08 506.63,536.59 506.02,536.33 504.02,537.85 501.15,534.98 502.67,532.98 502.41,532.37 499.92,532.03 499.92,527.97 502.41,527.63 502.67,527.02 501.15,525.02 504.02,522.15 506.02,523.67 506.63,523.41 506.97,520.92 511.03,520.92 511.37,523.41 511.98,523.67 513.98,522.15 516.85,525.02 515.33,527.02" fill="url(#lg)"/><circle cx="509" cy="530" r="3" fill="#464646"/><path d="M503.500 566.400l5.100 4.700-5.100 4.800M509.600 566.400l5.100 4.700-5.100 4.800" fill="none" stroke="#9a9a9a" stroke-width="1.200"/></svg>
<div style="left:494px;top:580px;width:1420px;height:6px;background:#111;"></div>
<div style="left:530px;top:85px;width:1057px;height:22px;background:#1c1c1c;"></div>
<div style="left:530px;top:85px;width:86.7px;height:22px;background:#464646;border-radius:5px 5px 0 0;"></div>
<div class="t" style="left:535.3px;top:86.5px;line-height:20px;color:#e8e8e8;letter-spacing:-0.05px;">Composition 2</div>
<div style="left:530px;top:107px;width:1057px;height:20px;background:#464646;"></div>
<div style="left:530px;top:107px;width:19.7px;height:451px;background:#464646;"></div>
<div style="left:549.7px;top:127px;width:1037.3px;height:430.7px;background:#000;"></div>
<div style="left:1587px;top:85px;width:6px;height:502px;background:#111;"></div>
<div style="left:523.5px;top:85px;width:6.5px;height:502px;background:#111;"></div>
<svg style="left:0px;top:0px;pointer-events:none;" width="1920" height="600" viewBox="0 0 1920 600"><path d="M555.39 124v3" stroke="#858585" stroke-width="1.050"/><path d="M566.28 119v8" stroke="#adadad" stroke-width="1.050"/><path d="M577.17 124v3" stroke="#858585" stroke-width="1.050"/><path d="M588.05 124v3" stroke="#858585" stroke-width="1.050"/><path d="M598.94 124v3" stroke="#858585" stroke-width="1.050"/><path d="M609.83 124v3" stroke="#858585" stroke-width="1.050"/><path d="M620.71 119v8" stroke="#adadad" stroke-width="1.050"/><path d="M631.6 124v3" stroke="#858585" stroke-width="1.050"/><path d="M642.48 124v3" stroke="#858585" stroke-width="1.050"/><path d="M653.37 124v3" stroke="#858585" stroke-width="1.050"/><path d="M664.26 124v3" stroke="#858585" stroke-width="1.050"/><path d="M675.14 119v8" stroke="#adadad" stroke-width="1.050"/><path d="M686.03 124v3" stroke="#858585" stroke-width="1.050"/><path d="M696.92 124v3" stroke="#858585" stroke-width="1.050"/><path d="M707.8 124v3" stroke="#858585" stroke-width="1.050"/><path d="M718.69 124v3" stroke="#858585" stroke-width="1.050"/><path d="M729.58 119v8" stroke="#adadad" stroke-width="1.050"/><path d="M740.46 124v3" stroke="#858585" stroke-width="1.050"/><path d="M751.35 124v3" stroke="#858585" stroke-width="1.050"/><path d="M762.24 124v3" stroke="#858585" stroke-width="1.050"/><path d="M773.12 124v3" stroke="#858585" stroke-width="1.050"/><path d="M784.01 119v8" stroke="#adadad" stroke-width="1.050"/><path d="M794.89 124v3" stroke="#858585" stroke-width="1.050"/><path d="M805.78 124v3" stroke="#858585" stroke-width="1.050"/><path d="M816.67 124v3" stroke="#858585" stroke-width="1.050"/><path d="M827.55 124v3" stroke="#858585" stroke-width="1.050"/><path d="M838.44 119v8" stroke="#adadad" stroke-width="1.050"/><path d="M849.33 124v3" stroke="#858585" stroke-width="1.050"/><path d="M860.21 124v3" stroke="#858585" stroke-width="1.050"/><path d="M871.1 124v3" stroke="#858585" stroke-width="1.050"/><path d="M881.99 124v3" stroke="#858585" stroke-width="1.050"/><path d="M892.87 119v8" stroke="#adadad" stroke-width="1.050"/><path d="M903.76 124v3" stroke="#858585" stroke-width="1.050"/><path d="M914.64 124v3" stroke="#858585" stroke-width="1.050"/><path d="M925.53 124v3" stroke="#858585" stroke-width="1.050"/><path d="M936.42 124v3" stroke="#858585" stroke-width="1.050"/><path d="M947.3 119v8" stroke="#adadad" stroke-width="1.050"/><path d="M958.19 124v3" stroke="#858585" stroke-width="1.050"/><path d="M969.08 124v3" stroke="#858585" stroke-width="1.050"/><path d="M979.96 124v3" stroke="#858585" stroke-width="1.050"/><path d="M990.85 124v3" stroke="#858585" stroke-width="1.050"/><path d="M1001.74 119v8" stroke="#adadad" stroke-width="1.050"/><path d="M1012.62 124v3" stroke="#858585" stroke-width="1.050"/><path d="M1023.51 124v3" stroke="#858585" stroke-width="1.050"/><path d="M1034.4 124v3" stroke="#858585" stroke-width="1.050"/><path d="M1045.28 124v3" stroke="#858585" stroke-width="1.050"/><path d="M1056.17 119v8" stroke="#adadad" stroke-width="1.050"/><path d="M1067.05 124v3" stroke="#858585" stroke-width="1.050"/><path d="M1077.94 124v3" stroke="#858585" stroke-width="1.050"/><path d="M1088.83 124v3" stroke="#858585" stroke-width="1.050"/><path d="M1099.71 124v3" stroke="#858585" stroke-width="1.050"/><path d="M1110.6 119v8" stroke="#adadad" stroke-width="1.050"/><path d="M1121.49 124v3" stroke="#858585" stroke-width="1.050"/><path d="M1132.37 124v3" stroke="#858585" stroke-width="1.050"/><path d="M1143.26 124v3" stroke="#858585" stroke-width="1.050"/><path d="M1154.15 124v3" stroke="#858585" stroke-width="1.050"/><path d="M1165.03 119v8" stroke="#adadad" stroke-width="1.050"/><path d="M1175.92 124v3" stroke="#858585" stroke-width="1.050"/><path d="M1186.8 124v3" stroke="#858585" stroke-width="1.050"/><path d="M1197.69 124v3" stroke="#858585" stroke-width="1.050"/><path d="M1208.58 124v3" stroke="#858585" stroke-width="1.050"/><path d="M1219.46 119v8" stroke="#adadad" stroke-width="1.050"/><path d="M1230.35 124v3" stroke="#858585" stroke-width="1.050"/><path d="M1241.24 124v3" stroke="#858585" stroke-width="1.050"/><path d="M1252.12 124v3" stroke="#858585" stroke-width="1.050"/><path d="M1263.01 124v3" stroke="#858585" stroke-width="1.050"/><path d="M1273.9 119v8" stroke="#adadad" stroke-width="1.050"/><path d="M1284.78 124v3" stroke="#858585" stroke-width="1.050"/><path d="M1295.67 124v3" stroke="#858585" stroke-width="1.050"/><path d="M1306.56 124v3" stroke="#858585" stroke-width="1.050"/><path d="M1317.44 124v3" stroke="#858585" stroke-width="1.050"/><path d="M1328.33 119v8" stroke="#adadad" stroke-width="1.050"/><path d="M1339.21 124v3" stroke="#858585" stroke-width="1.050"/><path d="M1350.1 124v3" stroke="#858585" stroke-width="1.050"/><path d="M1360.99 124v3" stroke="#858585" stroke-width="1.050"/><path d="M1371.87 124v3" stroke="#858585" stroke-width="1.050"/><path d="M1382.76 119v8" stroke="#adadad" stroke-width="1.050"/><path d="M1393.65 124v3" stroke="#858585" stroke-width="1.050"/><path d="M1404.53 124v3" stroke="#858585" stroke-width="1.050"/><path d="M1415.42 124v3" stroke="#858585" stroke-width="1.050"/><path d="M1426.31 124v3" stroke="#858585" stroke-width="1.050"/><path d="M1437.19 119v8" stroke="#adadad" stroke-width="1.050"/><path d="M1448.08 124v3" stroke="#858585" stroke-width="1.050"/><path d="M1458.96 124v3" stroke="#858585" stroke-width="1.050"/><path d="M1469.85 124v3" stroke="#858585" stroke-width="1.050"/><path d="M1480.74 124v3" stroke="#858585" stroke-width="1.050"/><path d="M1491.62 119v8" stroke="#adadad" stroke-width="1.050"/><path d="M1502.51 124v3" stroke="#858585" stroke-width="1.050"/><path d="M1513.4 124v3" stroke="#858585" stroke-width="1.050"/><path d="M1524.28 124v3" stroke="#858585" stroke-width="1.050"/><path d="M1535.17 124v3" stroke="#858585" stroke-width="1.050"/><path d="M1546.06 119v8" stroke="#adadad" stroke-width="1.050"/><path d="M1556.94 124v3" stroke="#858585" stroke-width="1.050"/><path d="M1567.83 124v3" stroke="#858585" stroke-width="1.050"/><path d="M1578.72 124v3" stroke="#858585" stroke-width="1.050"/><path d="M542 127.77h8" stroke="#adadad" stroke-width="1.050"/><path d="M546.500 138.66h3.200" stroke="#858585" stroke-width="1.050"/><path d="M546.500 149.54h3.200" stroke="#858585" stroke-width="1.050"/><path d="M546.500 160.43h3.200" stroke="#858585" stroke-width="1.050"/><path d="M546.500 171.32h3.200" stroke="#858585" stroke-width="1.050"/><path d="M542 182.2h8" stroke="#adadad" stroke-width="1.050"/><path d="M546.500 193.09h3.200" stroke="#858585" stroke-width="1.050"/><path d="M546.500 203.98h3.200" stroke="#858585" stroke-width="1.050"/><path d="M546.500 214.86h3.200" stroke="#858585" stroke-width="1.050"/><path d="M546.500 225.75h3.200" stroke="#858585" stroke-width="1.050"/><path d="M542 236.64h8" stroke="#adadad" stroke-width="1.050"/><path d="M546.500 247.52h3.200" stroke="#858585" stroke-width="1.050"/><path d="M546.500 258.41h3.200" stroke="#858585" stroke-width="1.050"/><path d="M546.500 269.3h3.200" stroke="#858585" stroke-width="1.050"/><path d="M546.500 280.18h3.200" stroke="#858585" stroke-width="1.050"/><path d="M542 291.07h8" stroke="#adadad" stroke-width="1.050"/><path d="M546.500 301.95h3.200" stroke="#858585" stroke-width="1.050"/><path d="M546.500 312.84h3.200" stroke="#858585" stroke-width="1.050"/><path d="M546.500 323.73h3.200" stroke="#858585" stroke-width="1.050"/><path d="M546.500 334.61h3.200" stroke="#858585" stroke-width="1.050"/><path d="M542 345.5h8" stroke="#adadad" stroke-width="1.050"/><path d="M546.500 356.39h3.200" stroke="#858585" stroke-width="1.050"/><path d="M546.500 367.27h3.200" stroke="#858585" stroke-width="1.050"/><path d="M546.500 378.16h3.200" stroke="#858585" stroke-width="1.050"/><path d="M546.500 389.05h3.200" stroke="#858585" stroke-width="1.050"/><path d="M542 399.93h8" stroke="#adadad" stroke-width="1.050"/><path d="M546.500 410.82h3.200" stroke="#858585" stroke-width="1.050"/><path d="M546.500 421.7h3.200" stroke="#858585" stroke-width="1.050"/><path d="M546.500 432.59h3.200" stroke="#858585" stroke-width="1.050"/><path d="M546.500 443.48h3.200" stroke="#858585" stroke-width="1.050"/><path d="M542 454.36h8" stroke="#adadad" stroke-width="1.050"/><path d="M546.500 465.25h3.200" stroke="#858585" stroke-width="1.050"/><path d="M546.500 476.14h3.200" stroke="#858585" stroke-width="1.050"/><path d="M546.500 487.02h3.200" stroke="#858585" stroke-width="1.050"/><path d="M546.500 497.91h3.200" stroke="#858585" stroke-width="1.050"/><path d="M542 508.8h8" stroke="#adadad" stroke-width="1.050"/><path d="M546.500 519.68h3.200" stroke="#858585" stroke-width="1.050"/><path d="M546.500 530.57h3.200" stroke="#858585" stroke-width="1.050"/><path d="M546.500 541.46h3.200" stroke="#858585" stroke-width="1.050"/><path d="M546.500 552.34h3.200" stroke="#858585" stroke-width="1.050"/></svg>
<div class="t" style="left:553.9px;top:105.7px;line-height:20px;color:#bebebe;font-size:10px;letter-spacing:0.16px;">-1500</div>
<div class="t" style="left:608.33px;top:105.7px;line-height:20px;color:#bebebe;font-size:10px;letter-spacing:0.16px;">-1350</div>
<div class="t" style="left:662.76px;top:105.7px;line-height:20px;color:#bebebe;font-size:10px;letter-spacing:0.16px;">-1200</div>
<div class="t" style="left:717.19px;top:105.7px;line-height:20px;color:#bebebe;font-size:10px;letter-spacing:0.16px;">-1050</div>
<div class="t" style="left:774.46px;top:105.7px;line-height:20px;color:#bebebe;font-size:10px;letter-spacing:0.17px;">-900</div>
<div class="t" style="left:828.9px;top:105.7px;line-height:20px;color:#bebebe;font-size:10px;letter-spacing:0.17px;">-750</div>
<div class="t" style="left:883.33px;top:105.7px;line-height:20px;color:#bebebe;font-size:10px;letter-spacing:0.17px;">-600</div>
<div class="t" style="left:937.76px;top:105.7px;line-height:20px;color:#bebebe;font-size:10px;letter-spacing:0.17px;">-450</div>
<div class="t" style="left:992.19px;top:105.7px;line-height:20px;color:#bebebe;font-size:10px;letter-spacing:0.17px;">-300</div>
<div class="t" style="left:1046.62px;top:105.7px;line-height:20px;color:#bebebe;font-size:10px;letter-spacing:0.17px;">-150</div>
<div class="t" style="left:1108.56px;top:105.7px;line-height:20px;color:#bebebe;font-size:10px;letter-spacing:0.12px;">0</div>
<div class="t" style="left:1157.31px;top:105.7px;line-height:20px;color:#bebebe;font-size:10px;letter-spacing:0.12px;">150</div>
<div class="t" style="left:1211.74px;top:105.7px;line-height:20px;color:#bebebe;font-size:10px;letter-spacing:0.12px;">300</div>
<div class="t" style="left:1266.17px;top:105.7px;line-height:20px;color:#bebebe;font-size:10px;letter-spacing:0.12px;">450</div>
<div class="t" style="left:1320.61px;top:105.7px;line-height:20px;color:#bebebe;font-size:10px;letter-spacing:0.12px;">600</div>
<div class="t" style="left:1375.04px;top:105.7px;line-height:20px;color:#bebebe;font-size:10px;letter-spacing:0.12px;">750</div>
<div class="t" style="left:1429.47px;top:105.7px;line-height:20px;color:#bebebe;font-size:10px;letter-spacing:0.12px;">900</div>
<div class="t" style="left:1481.06px;top:105.7px;line-height:20px;color:#bebebe;font-size:10px;letter-spacing:0.12px;">1050</div>
<div class="t" style="left:1535.49px;top:105.7px;line-height:20px;color:#bebebe;font-size:10px;letter-spacing:0.12px;">1200</div>
<div class="t" style="left:535.3px;top:107.8px;line-height:20px;color:#bebebe;font-size:10px;letter-spacing:-0.53px;">px</div>
<div class="t" style="left:508px;top:120.77px;width:60px;height:14px;line-height:14px;text-align:center;font-size:10px;color:#bebebe;transform:rotate(-90deg);">600</div>
<div class="t" style="left:508px;top:175.2px;width:60px;height:14px;line-height:14px;text-align:center;font-size:10px;color:#bebebe;transform:rotate(-90deg);">450</div>
<div class="t" style="left:508px;top:229.64px;width:60px;height:14px;line-height:14px;text-align:center;font-size:10px;color:#bebebe;transform:rotate(-90deg);">300</div>
<div class="t" style="left:508px;top:284.07px;width:60px;height:14px;line-height:14px;text-align:center;font-size:10px;color:#bebebe;transform:rotate(-90deg);">150</div>
<div class="t" style="left:508px;top:338.5px;width:60px;height:14px;line-height:14px;text-align:center;font-size:10px;color:#bebebe;transform:rotate(-90deg);">0</div>
<div class="t" style="left:508px;top:392.93px;width:60px;height:14px;line-height:14px;text-align:center;font-size:10px;color:#bebebe;transform:rotate(-90deg);">-150</div>
<div class="t" style="left:508px;top:447.36px;width:60px;height:14px;line-height:14px;text-align:center;font-size:10px;color:#bebebe;transform:rotate(-90deg);">-300</div>
<div class="t" style="left:508px;top:501.8px;width:60px;height:14px;line-height:14px;text-align:center;font-size:10px;color:#bebebe;transform:rotate(-90deg);">-450</div>
<svg style="left:0px;top:0px;pointer-events:none;" width="1920" height="600" viewBox="0 0 1920 600"><path d="M754.7 127V557.700" stroke="#383838" stroke-width="1.100"/><path d="M769.22 127V557.700" stroke="#383838" stroke-width="1.100"/><path d="M783.75 127V557.700" stroke="#383838" stroke-width="1.100"/><path d="M798.27 127V557.700" stroke="#383838" stroke-width="1.100"/><path d="M812.8 127V557.700" stroke="#383838" stroke-width="1.100"/><path d="M827.32 127V557.700" stroke="#383838" stroke-width="1.100"/><path d="M841.84 127V557.700" stroke="#383838" stroke-width="1.100"/><path d="M856.37 127V557.700" stroke="#383838" stroke-width="1.100"/><path d="M870.89 127V557.700" stroke="#383838" stroke-width="1.100"/><path d="M885.42 127V557.700" stroke="#383838" stroke-width="1.100"/><path d="M899.94 127V557.700" stroke="#383838" stroke-width="1.100"/><path d="M914.46 127V557.700" stroke="#383838" stroke-width="1.100"/><path d="M928.99 127V557.700" stroke="#383838" stroke-width="1.100"/><path d="M943.51 127V557.700" stroke="#383838" stroke-width="1.100"/><path d="M958.04 127V557.700" stroke="#383838" stroke-width="1.100"/><path d="M972.56 127V557.700" stroke="#383838" stroke-width="1.100"/><path d="M987.08 127V557.700" stroke="#383838" stroke-width="1.100"/><path d="M1001.61 127V557.700" stroke="#383838" stroke-width="1.100"/><path d="M1016.13 127V557.700" stroke="#383838" stroke-width="1.100"/><path d="M1030.66 127V557.700" stroke="#383838" stroke-width="1.100"/><path d="M1045.18 127V557.700" stroke="#383838" stroke-width="1.100"/><path d="M1059.7 127V557.700" stroke="#383838" stroke-width="1.100"/><path d="M1074.23 127V557.700" stroke="#383838" stroke-width="1.100"/><path d="M1088.75 127V557.700" stroke="#383838" stroke-width="1.100"/><path d="M1103.28 127V557.700" stroke="#383838" stroke-width="1.100"/><path d="M1117.8 127V557.700" stroke="#383838" stroke-width="1.100"/><path d="M1132.32 127V557.700" stroke="#383838" stroke-width="1.100"/><path d="M1146.85 127V557.700" stroke="#383838" stroke-width="1.100"/><path d="M1161.37 127V557.700" stroke="#383838" stroke-width="1.100"/><path d="M1175.9 127V557.700" stroke="#383838" stroke-width="1.100"/><path d="M1190.42 127V557.700" stroke="#383838" stroke-width="1.100"/><path d="M1204.94 127V557.700" stroke="#383838" stroke-width="1.100"/><path d="M1219.47 127V557.700" stroke="#383838" stroke-width="1.100"/><path d="M1233.99 127V557.700" stroke="#383838" stroke-width="1.100"/><path d="M1248.52 127V557.700" stroke="#383838" stroke-width="1.100"/><path d="M1263.04 127V557.700" stroke="#383838" stroke-width="1.100"/><path d="M1277.56 127V557.700" stroke="#383838" stroke-width="1.100"/><path d="M1292.09 127V557.700" stroke="#383838" stroke-width="1.100"/><path d="M1306.61 127V557.700" stroke="#383838" stroke-width="1.100"/><path d="M1321.14 127V557.700" stroke="#383838" stroke-width="1.100"/><path d="M1335.66 127V557.700" stroke="#383838" stroke-width="1.100"/><path d="M1350.18 127V557.700" stroke="#383838" stroke-width="1.100"/><path d="M1364.71 127V557.700" stroke="#383838" stroke-width="1.100"/><path d="M1379.23 127V557.700" stroke="#383838" stroke-width="1.100"/><path d="M1393.76 127V557.700" stroke="#383838" stroke-width="1.100"/><path d="M1408.28 127V557.700" stroke="#383838" stroke-width="1.100"/><path d="M1422.8 127V557.700" stroke="#383838" stroke-width="1.100"/><path d="M1437.33 127V557.700" stroke="#383838" stroke-width="1.100"/><path d="M1451.85 127V557.700" stroke="#383838" stroke-width="1.100"/><path d="M1466.38 127V557.700" stroke="#383838" stroke-width="1.100"/><path d="M754.7 135.3H1466.38" stroke="#383838" stroke-width="1.100"/><path d="M754.7 149.82H1466.38" stroke="#383838" stroke-width="1.100"/><path d="M754.7 164.35H1466.38" stroke="#383838" stroke-width="1.100"/><path d="M754.7 178.87H1466.38" stroke="#383838" stroke-width="1.100"/><path d="M754.7 193.4H1466.38" stroke="#383838" stroke-width="1.100"/><path d="M754.7 207.92H1466.38" stroke="#383838" stroke-width="1.100"/><path d="M754.7 222.44H1466.38" stroke="#383838" stroke-width="1.100"/><path d="M754.7 236.97H1466.38" stroke="#383838" stroke-width="1.100"/><path d="M754.7 251.49H1466.38" stroke="#383838" stroke-width="1.100"/><path d="M754.7 266.02H1466.38" stroke="#383838" stroke-width="1.100"/><path d="M754.7 280.54H1466.38" stroke="#383838" stroke-width="1.100"/><path d="M754.7 295.06H1466.38" stroke="#383838" stroke-width="1.100"/><path d="M754.7 309.59H1466.38" stroke="#383838" stroke-width="1.100"/><path d="M754.7 324.11H1466.38" stroke="#383838" stroke-width="1.100"/><path d="M754.7 338.64H1466.38" stroke="#383838" stroke-width="1.100"/><path d="M754.7 353.16H1466.38" stroke="#383838" stroke-width="1.100"/><path d="M754.7 367.68H1466.38" stroke="#383838" stroke-width="1.100"/><path d="M754.7 382.21H1466.38" stroke="#383838" stroke-width="1.100"/><path d="M754.7 396.73H1466.38" stroke="#383838" stroke-width="1.100"/><path d="M754.7 411.26H1466.38" stroke="#383838" stroke-width="1.100"/><path d="M754.7 425.78H1466.38" stroke="#383838" stroke-width="1.100"/><path d="M754.7 440.3H1466.38" stroke="#383838" stroke-width="1.100"/><path d="M754.7 454.83H1466.38" stroke="#383838" stroke-width="1.100"/><path d="M754.7 469.35H1466.38" stroke="#383838" stroke-width="1.100"/><path d="M754.7 483.88H1466.38" stroke="#383838" stroke-width="1.100"/><path d="M754.7 498.4H1466.38" stroke="#383838" stroke-width="1.100"/><path d="M754.7 512.92H1466.38" stroke="#383838" stroke-width="1.100"/><path d="M754.7 527.45H1466.38" stroke="#383838" stroke-width="1.100"/><path d="M754.7 541.97H1466.38" stroke="#383838" stroke-width="1.100"/><path d="M754.7 556.5H1466.38" stroke="#383838" stroke-width="1.100"/><rect x="762.4" y="149.7" width="697.4" height="392.1" fill="#0a0a0a" fill-opacity="0.58"/></svg>
<div class="t" style="left:569.5px;top:457.6px;line-height:20px;color:#ededed;letter-spacing:-0.27px;">Hold S</div>
<div class="t" style="left:606.48px;top:457.6px;line-height:20px;color:#4c4c4c;letter-spacing:-0.16px;">Direct Layer Selection</div>
<div class="t" style="left:569.5px;top:471.62px;line-height:20px;color:#ededed;letter-spacing:-0.69px;">Space</div>
<div class="t" style="left:602.68px;top:471.62px;line-height:20px;color:#4c4c4c;letter-spacing:-0.14px;">Play/ Stop</div>
<div class="t" style="left:569.5px;top:485.64px;line-height:20px;color:#ededed;letter-spacing:-0.33px;">Space + click + drag</div>
<div class="t" style="left:674.28px;top:485.64px;line-height:20px;color:#4c4c4c;letter-spacing:-0.65px;">Pan</div>
<div class="t" style="left:569.5px;top:499.66px;line-height:20px;color:#ededed;letter-spacing:-0.12px;">Alt + click + drag</div>
<div class="t" style="left:658.69px;top:499.66px;line-height:20px;color:#4c4c4c;letter-spacing:-0.05px;">Move Pivot Point</div>
<div class="t" style="left:569.5px;top:513.68px;line-height:20px;color:#ededed;letter-spacing:-0.03px;">Shift</div>
<div class="t" style="left:595.94px;top:513.68px;line-height:20px;color:#4c4c4c;letter-spacing:-0.4px;">Enable Snapping</div>
<div class="t" style="left:569.5px;top:533px;line-height:20px;color:#ededed;letter-spacing:0.15px;">00:00:00:25</div>
<div class="t" style="left:998.4px;top:533.5px;line-height:20px;color:#ededed;letter-spacing:0.09px;">Viewport Quality: High</div>
<div style="left:530px;top:557.7px;width:1057px;height:22.3px;background:#464646;"></div>
<div style="left:535.5px;top:561px;width:77.5px;height:15.7px;background:#2a2a2a;border-radius:3px;"></div>
<div class="t" style="left:538.5px;top:560.3px;line-height:20px;color:#e8e8e8;letter-spacing:-0.01px;">36%</div>
<svg style="left:600px;top:566.5px;" width="9" height="6" viewBox="0 0 9 6"><path d="M0.700 0.800l3.800 3.900 3.800-3.900" fill="none" stroke="#ddd" stroke-width="1.100"/></svg>
<div style="left:1593px;top:85px;width:321px;height:22px;background:#1c1c1c;"></div>
<div style="left:1593px;top:85px;width:40px;height:22px;background:#464646;border-radius:5px 5px 0 0;"></div>
<div style="left:1634px;top:85px;width:69px;height:22px;background:#242424;border-radius:5px 5px 0 0;"></div>
<div class="t" style="left:1598.3px;top:86.5px;line-height:20px;color:#e8e8e8;letter-spacing:0.16px;">Color</div>
<div class="t" style="left:1639.5px;top:86.5px;line-height:20px;color:#e8e8e8;letter-spacing:-0.27px;">Add Layers</div>
<div style="left:1593px;top:107px;width:321px;height:377px;background:#464646;"></div>
<div style="left:1899.8px;top:107px;width:14.2px;height:377px;background:#2a2a2a;"></div>
<div style="left:1901.8px;top:108px;width:10.2px;height:302.6px;background:#4f4f4f;border-radius:5.1px;"></div>
<div style="left:1646px;top:119.8px;width:200px;height:200px;border-radius:50%;background:conic-gradient(from 90deg,#f00,#f0f,#00f,#0ff,#0f0,#ff0,#f00);"></div>
<div style="left:1671.3px;top:145.1px;width:149.4px;height:149.4px;background:#464646;border-radius:50%;"></div>
<div style="left:1702px;top:176px;width:90.2px;height:90.2px;background:linear-gradient(to right,#000,rgba(0,0,0,0)),linear-gradient(to bottom,#fff,#f00);"></div>
<div style="left:1738.6px;top:169.5px;width:12.6px;height:12.6px;border-radius:50%;border:1.200px solid #e4e4e4;"></div>
<div style="left:1826.7px;top:213.7px;width:12.6px;height:12.6px;border-radius:50%;border:1.200px solid #f4f4f4;"></div>
<div style="left:1599.8px;top:333px;width:22.3px;height:22px;background:#7a7a7a;border-radius:3px;"></div>
<div class="t" style="left:1625px;top:335px;line-height:20px;color:#e8e8e8;letter-spacing:-0.12px;">Gray</div>
<div style="left:1871px;top:333px;width:22px;height:22px;background:#2a2a2a;border-radius:4px;border:1px solid #262626;"></div>
<svg style="left:1875.5px;top:337.5px;" width="13" height="13" viewBox="0 0 13 13"><path d="M0.800 12.200l.7-2.600 5.800-5.800 1.900 1.900-5.800 5.800z" fill="none" stroke="#ddd" stroke-width="1"/><path d="M6.200 2.600l4.200 4.200" stroke="#ddd" stroke-width="1.800"/><path d="M8 4.200l1.700-1.900a1.900 1.900 0 0 1 2.700 2.700l-1.900 1.700z" fill="#ddd"/></svg>
<div style="left:1600.4px;top:360.4px;width:49px;height:17.2px;background:#4e4e4e;border-radius:3px;border:1px solid #3a3a3a;"></div>
<div class="t" style="left:1603.5px;top:359.8px;line-height:20px;color:#e8e8e8;letter-spacing:-0.11px;">Hex</div>
<svg style="left:1636.5px;top:366.5px;" width="9" height="6" viewBox="0 0 9 6"><path d="M0.700 0.800l3.800 3.900 3.800-3.900" fill="none" stroke="#cfcfcf" stroke-width="1.0"/></svg>
<div style="left:1653px;top:358px;width:240px;height:22px;background:#2a2a2a;border-radius:3px;"></div>
<div class="t" style="left:1658px;top:359.8px;line-height:20px;color:#5a5a5a;letter-spacing:-0.67px;">#</div>
<div class="t" style="left:1670px;top:359.8px;line-height:20px;color:#e8e8e8;letter-spacing:-0.09px;">7a7a7a</div>
<div style="left:1600px;top:390px;width:236px;height:4.4px;background:#e4e4e4;border-radius:2.2px;"></div>
<svg style="left:1828.5px;top:386.5px;" width="11" height="11" viewBox="0 0 11 11"><circle cx="5.500" cy="5.500" r="5.200" fill="#6fcfb0"/><circle cx="5.500" cy="5.500" r="2" fill="#4aa88c"/></svg>
<div style="left:1849px;top:384.3px;width:44px;height:15.7px;background:#2a2a2a;border-radius:3px;"></div>
<div class="t" style="left:1853px;top:383px;line-height:20px;color:#5a5a5a;">A</div>
<div class="t" style="left:1866px;top:383px;line-height:20px;color:#e8e8e8;letter-spacing:0.16px;">255</div>
<div style="left:1597px;top:406px;width:299px;height:21.7px;background:#2a2a2a;"></div>
<div style="left:1599px;top:408px;width:148px;height:19.7px;background:#464646;border-radius:5px 5px 0 0;"></div>
<div class="t" style="left:1648px;top:408.3px;line-height:20px;color:#e8e8e8;letter-spacing:-0.25px;">Swatches</div>
<div class="t" style="left:1793.25px;top:408.3px;line-height:20px;color:#b8b8b8;letter-spacing:0.05px;">Generator</div>
<div style="left:1598px;top:431px;width:257px;height:17.7px;background:#646464;border-radius:4px;"></div>
<div style="left:1599px;top:432px;width:62px;height:15.7px;background:#242424;border-radius:3px;"></div>
<svg style="left:1605.5px;top:435.5px;" width="12" height="9.5" viewBox="0 0 12 9.5"><path d="M1 0v9.500M4 0v9.500" stroke="#2fd16f" stroke-width="1.600"/><path d="M6.500 0.300l3.500 9" stroke="#2fd16f" stroke-width="1.600"/></svg>
<div class="t" style="left:1621px;top:430.8px;line-height:20px;color:#e8e8e8;letter-spacing:0.12px;">Library</div>
<svg style="left:1671px;top:434.5px;" width="11" height="11" viewBox="0 0 11 11"><path d="M0 1h4l1 1.500H0z" fill="#ddd"/><rect x="0" y="2.500" width="10.500" height="8" rx="1" fill="#ddd"/><path d="M1.500 5h1.500M4 5h5M1.500 7.500h1.500M4 7.500h5" stroke="#646464" stroke-width="1"/></svg>
<div class="t" style="left:1686.3px;top:430.8px;line-height:20px;color:#e8e8e8;letter-spacing:0.09px;">Project</div>
<svg style="left:1738px;top:434px;" width="8" height="11" viewBox="0 0 8 11"><path d="M0.600 0.600h4.400l2.500 2.500v7.300H0.600z" fill="none" stroke="#ddd" stroke-width="1.100"/><path d="M5 0.600v2.500h2.500" fill="none" stroke="#ddd" stroke-width="1"/></svg>
<div class="t" style="left:1752px;top:430.8px;line-height:20px;color:#e8e8e8;letter-spacing:-0.5px;">Scene</div>
<svg style="left:1801px;top:434.5px;" width="11" height="11" viewBox="0 0 11 11"><path d="M3 0.600h5a2.400 2.400 0 0 1 2.400 2.400v3.500l-4 4H3a2.400 2.400 0 0 1-2.400-2.400V3A2.400 2.400 0 0 1 3 0.600z" fill="none" stroke="#ddd" stroke-width="1.100"/><path d="M10 6.500H8a1.600 1.600 0 0 0-1.600 1.600v2" fill="none" stroke="#ddd" stroke-width="1"/></svg>
<div class="t" style="left:1816.3px;top:430.8px;line-height:20px;color:#e8e8e8;letter-spacing:-0.39px;">Labels</div>
<div style="left:1858.4px;top:431px;width:36.6px;height:17.7px;background:#646464;border-radius:4px;"></div>
<div style="left:1859.2px;top:432px;width:16px;height:15.7px;background:#242424;border-radius:3px;"></div>
<svg style="left:1862.5px;top:435px;" width="10" height="10" viewBox="0 0 10 10"><g fill="#2fd16f"><rect x="0" y="0" width="3.600" height="3.600"/><rect x="5.500" y="0" width="3.600" height="3.600"/><rect x="0" y="5.500" width="3.600" height="3.600"/><rect x="5.500" y="5.500" width="3.600" height="3.600"/></g></svg>
<svg style="left:1880.5px;top:435.5px;" width="11" height="9" viewBox="0 0 11 9"><path d="M0 1h10.500M0 4.300h10.500M0 7.600h10.500" stroke="#ddd" stroke-width="1.100"/></svg>
<div style="left:1598.6px;top:452.8px;width:274.8px;height:16.2px;background:#505050;border-radius:3px;border:1px solid #3e3e3e;"></div>
<div class="t" style="left:1601px;top:451.8px;line-height:20px;color:#e8e8e8;letter-spacing:-0.01px;">new</div>
<svg style="left:1860px;top:459.5px;" width="9" height="6" viewBox="0 0 9 6"><path d="M0.700 0.800l3.800 3.900 3.800-3.900" fill="none" stroke="#cfcfcf" stroke-width="1.0"/></svg>
<div style="left:1879.9px;top:460.1px;width:2.3px;height:2.3px;background:#ddd;"></div>
<div style="left:1884.9px;top:460.1px;width:2.3px;height:2.3px;background:#ddd;"></div>
<div style="left:1889.9px;top:460.1px;width:2.3px;height:2.3px;background:#ddd;"></div>
<div style="left:1598px;top:470px;width:297px;height:14px;background:#2a2a2a;"></div>
<div style="left:1599.8px;top:472px;width:18.2px;height:12px;background:#9650fa;border-radius:3px 3px 0 0;"></div>
<div style="left:1621.85px;top:472px;width:18.2px;height:12px;background:#50a0fa;border-radius:3px 3px 0 0;"></div>
<div style="left:1643.9px;top:472px;width:18.2px;height:12px;background:#fa7850;border-radius:3px 3px 0 0;"></div>
<div style="left:1665.95px;top:472px;width:18.2px;height:12px;background:#50fab4;border-radius:3px 3px 0 0;"></div>
<div style="left:1688px;top:472px;width:18.2px;height:12px;background:#fa5064;border-radius:3px 3px 0 0;"></div>
<div style="left:1710.05px;top:472px;width:18.2px;height:12px;background:#fa50be;border-radius:3px 3px 0 0;"></div>
<div style="left:1732.1px;top:472px;width:18.2px;height:12px;background:#fad250;border-radius:3px 3px 0 0;"></div>
<div style="left:1754.15px;top:472px;width:18.2px;height:12px;background:#4664d2;border-radius:3px 3px 0 0;"></div>
<div style="left:1776.2px;top:472px;width:18.2px;height:12px;background:#5ae0d2;border-radius:3px 3px 0 0;"></div>
<div style="left:1798.25px;top:472px;width:18.2px;height:12px;background:#d782d7;border-radius:3px 3px 0 0;"></div>
<div style="left:1820.3px;top:472px;width:18.2px;height:12px;background:#b4eb8c;border-radius:3px 3px 0 0;"></div>
<div style="left:1842.35px;top:472px;width:18.2px;height:12px;background:#6e50fa;border-radius:3px 3px 0 0;"></div>
<div style="left:1593px;top:484px;width:321px;height:6px;background:#111;"></div>
<div style="left:1593px;top:490px;width:321px;height:22px;background:#1c1c1c;"></div>
<div style="left:1593px;top:490px;width:38px;height:22px;background:#464646;border-radius:5px 5px 0 0;"></div>
<div class="t" style="left:1598.3px;top:491.5px;line-height:20px;color:#e8e8e8;letter-spacing:0.06px;">Align</div>
<div style="left:1593px;top:512px;width:321px;height:68px;background:#464646;"></div>
<div class="t" style="left:1601px;top:521.7px;line-height:20px;color:#e8e8e8;letter-spacing:0.13px;">Alignment</div>
<div class="t" style="left:1601px;top:550px;line-height:20px;color:#e8e8e8;letter-spacing:0.29px;">Distribution</div>
<div style="left:1790.2px;top:522.6px;width:53.7px;height:17px;background:#2a2a2a;border-radius:4px;"></div>
<div style="left:1807.6px;top:522.6px;width:1px;height:17px;background:#464646;"></div>
<div style="left:1825.5px;top:522.6px;width:1px;height:17px;background:#464646;"></div>
<div style="left:1852.2px;top:522.6px;width:53.7px;height:17px;background:#2a2a2a;border-radius:4px;"></div>
<div style="left:1869.6px;top:522.6px;width:1px;height:17px;background:#464646;"></div>
<div style="left:1887.5px;top:522.6px;width:1px;height:17px;background:#464646;"></div>
<div style="left:1790.2px;top:550.5px;width:53.7px;height:17px;background:#2a2a2a;border-radius:4px;"></div>
<div style="left:1807.6px;top:550.5px;width:1px;height:17px;background:#464646;"></div>
<div style="left:1825.5px;top:550.5px;width:1px;height:17px;background:#464646;"></div>
<svg style="left:1790.2px;top:522.6px;" width="17.9" height="17" viewBox="0 0 17.9 17"><path d="M3.500 2.500v12" stroke="#e4e4e4" stroke-width="1.100"/><path d="M6 6h5.500M6 11h7.500" stroke="#e4e4e4" stroke-width="1.500"/></svg>
<svg style="left:1808.1px;top:522.6px;" width="17.9" height="17" viewBox="0 0 17.9 17"><path d="M9 2.500v12" stroke="#e4e4e4" stroke-width="1.100"/><path d="M5.500 6h7M3.500 11h11" stroke="#e4e4e4" stroke-width="1.500"/></svg>
<svg style="left:1826px;top:522.6px;" width="17.9" height="17" viewBox="0 0 17.9 17"><path d="M14.500 2.500v12" stroke="#e4e4e4" stroke-width="1.100"/><path d="M6.500 6h5.500M4.500 11h7.500" stroke="#e4e4e4" stroke-width="1.500"/></svg>
<svg style="left:1852.2px;top:522.6px;" width="17.9" height="17" viewBox="0 0 17.9 17"><path d="M3 3.500h12" stroke="#e4e4e4" stroke-width="1.100"/><path d="M6.500 6v7.500M11.500 6v4.500" stroke="#e4e4e4" stroke-width="1.500"/></svg>
<svg style="left:1870.1px;top:522.6px;" width="17.9" height="17" viewBox="0 0 17.9 17"><path d="M3 8.500h12" stroke="#e4e4e4" stroke-width="1.100"/><path d="M6.500 4v9M11.500 5.500v6" stroke="#e4e4e4" stroke-width="1.500"/></svg>
<svg style="left:1888px;top:522.6px;" width="17.9" height="17" viewBox="0 0 17.9 17"><path d="M3 14h12" stroke="#e4e4e4" stroke-width="1.100"/><path d="M6.500 8v4.500M11.500 4v8.500" stroke="#e4e4e4" stroke-width="1.500"/></svg>
<svg style="left:1790.2px;top:550.5px;" width="17.9" height="17" viewBox="0 0 17.9 17"><path d="M3.500 2v13M14 2v13" stroke="#e4e4e4" stroke-width="1.100"/><path d="M8.800 4.500v8" stroke="#e4e4e4" stroke-width="2"/></svg>
<svg style="left:1808.1px;top:550.5px;" width="17.9" height="17" viewBox="0 0 17.9 17"><path d="M2.500 3h13M2.500 14h13" stroke="#e4e4e4" stroke-width="1.100"/><path d="M5 8.500h8" stroke="#e4e4e4" stroke-width="2"/></svg>
<svg style="left:1826px;top:550.5px;" width="17.9" height="17" viewBox="0 0 17.9 17"><path d="M2.500 5v-2.500h2.500M13 2.500h2.500v2.500M15.500 12v2.500h-2.500M5 14.500H2.500v-2.500" fill="none" stroke="#e4e4e4" stroke-width="1.100"/><rect x="4.500" y="9.500" width="2.200" height="3" fill="#e4e4e4"/><rect x="8" y="7" width="2.200" height="3" fill="#e4e4e4"/><rect x="11.500" y="4.500" width="2.200" height="3" fill="#e4e4e4"/></svg>
<div style="left:1593px;top:580px;width:321px;height:6px;background:#111;"></div>
<div style="left:494px;top:586px;width:1420px;height:22px;background:#1c1c1c;"></div>
<div style="left:494px;top:586px;width:88.5px;height:22px;background:#464646;border-radius:5px 5px 0 0;"></div>
<div style="left:584px;top:586px;width:99.5px;height:22px;background:#242424;border-radius:5px 5px 0 0;"></div>
<div style="left:685px;top:586px;width:111px;height:22px;background:#242424;border-radius:5px 5px 0 0;"></div>
<div class="t" style="left:499.5px;top:587.5px;line-height:20px;color:#e8e8e8;letter-spacing:-0.19px;">Scene Window</div>
<div class="t" style="left:589.5px;top:587.5px;line-height:20px;color:#e8e8e8;letter-spacing:-0.13px;">JavaScript Editor</div>
<div class="t" style="left:690.5px;top:587.5px;line-height:20px;color:#e8e8e8;letter-spacing:-0.22px;">Dependency Graph</div>
<div style="left:494px;top:607.7px;width:1420px;height:1.6px;background:#2fcf6f;"></div>
<div style="left:494px;top:609.3px;width:525px;height:388.7px;background:#2a2a2a;"></div>
<div class="t" style="left:802.5px;top:610px;line-height:20px;color:#a6a6a6;letter-spacing:-0.05px;">Composition 1</div>
<div style="left:494px;top:630px;width:525px;height:24px;background:#464646;"></div>
<div style="left:496.3px;top:632px;width:314.5px;height:19.7px;background:#262626;border-radius:10px;"></div>
<svg style="left:500.3px;top:635px;" width="14" height="14" viewBox="0 0 14 14"><circle cx="5.7" cy="5.700" r="4.400" fill="none" stroke="#ddd" stroke-width="1.150"/><path d="M9.400 9.400l2.700 2.700" stroke="#ddd" stroke-width="2.100"/></svg>
<div class="t" style="left:520px;top:633.1px;line-height:20px;color:#7c7c7c;letter-spacing:-0.24px;">Enter a layer name</div>
<div style="left:813.3px;top:632.5px;width:19.2px;height:19px;background:#2a2a2a;border-radius:4px;border:1px solid #262626;"></div>
<svg style="left:813.3px;top:632.5px;" width="19.2" height="19" viewBox="0 0 19.2 19"><path d="M9.6 3.500v12M3.500 9.5h12.2" stroke="#eee" stroke-width="1.500"/><path d="M18.2 15v3h-3z" fill="#6fcfb0"/></svg>
<div style="left:857px;top:632.5px;width:19.2px;height:19px;background:#2a2a2a;border-radius:4px;border:1px solid #262626;"></div>
<div style="left:878.8px;top:632.5px;width:19.2px;height:19px;background:#2a2a2a;border-radius:4px;border:1px solid #262626;"></div>
<div style="left:900.6px;top:632.5px;width:19.2px;height:19px;background:#2a2a2a;border-radius:4px;border:1px solid #262626;"></div>
<svg style="left:857px;top:632.5px;" width="19.2" height="19" viewBox="0 0 19.2 19"><circle cx="7" cy="12.500" r="4.500" fill="#444"/><circle cx="8.500" cy="11" r="4.500" fill="#666"/><circle cx="10" cy="9.500" r="4.500" fill="#999"/><circle cx="12" cy="7.500" r="4.500" fill="#ddd"/></svg>
<svg style="left:878.8px;top:632.5px;" width="19.2" height="19" viewBox="0 0 19.2 19"><g fill="#ddd"><circle cx="5" cy="4.500" r="1.100"/><circle cx="11.500" cy="4.800" r="1.100"/><circle cx="5" cy="11" r="1.100"/><path d="M11 7.500l1.100 2.700 2.700 1.100-2.700 1.100-1.100 2.700-1.100-2.700-2.700-1.100 2.700-1.100z"/></g><path d="M17.500 14v3.500h-3.500z" fill="#6fcfb0"/></svg>
<svg style="left:900.6px;top:632.5px;" width="19.2" height="19" viewBox="0 0 19.2 19"><path d="M2.500 5h3M8.500 5h8M2.500 9.500h7M12.500 9.500h4M2.500 14h3M8.500 14h8" stroke="#ddd" stroke-width="1.100"/><circle cx="7" cy="5" r="1.500" fill="#2a2a2a" stroke="#ddd" stroke-width="1"/><circle cx="11" cy="9.500" r="1.500" fill="#2a2a2a" stroke="#ddd" stroke-width="1"/><circle cx="7" cy="14" r="1.500" fill="#2a2a2a" stroke="#ddd" stroke-width="1"/></svg>
<div style="left:922.5px;top:632px;width:94px;height:20px;background:#262626;border-radius:3px;"></div>
<div class="t" style="left:928px;top:632.5px;line-height:20px;color:#555;letter-spacing:-0.83px;">F</div>
<div class="t" style="left:940.5px;top:632.5px;line-height:20px;color:#e8e8e8;letter-spacing:-0.17px;">25</div>
<div style="left:494px;top:653px;width:525px;height:19px;background:#464646;"></div>
<svg style="left:500.3px;top:657.3px;" width="9" height="10.5" viewBox="0 0 9 10.5"><path d="M2 4.500V3a2.500 2.500 0 0 1 5 0v1.500" fill="none" stroke="#c8c8c8" stroke-width="1.300"/><rect x="0.300" y="4.500" width="8.400" height="5.800" rx=".6" fill="#c8c8c8"/><rect x="3.700" y="6.500" width="1.600" height="1.800" fill="#464646"/></svg>
<svg style="left:517.2px;top:658.8px;" width="14" height="9" viewBox="0 0 14 9"><path d="M0.500 4.500C3 0.800 11 0.800 13.500 4.500 11 8.200 3 8.200 0.500 4.500z" fill="none" stroke="#c8c8c8" stroke-width="1.100"/><circle cx="7" cy="4.500" r="2.200" fill="#c8c8c8"/></svg>
<svg style="left:536.5px;top:657px;" width="13" height="13.5" viewBox="0 0 13 13.5"><path d="M6.500 0.600l5.700 3v6.300l-5.700 3-5.700-3V3.600z" fill="none" stroke="#c8c8c8" stroke-width="1.100"/><path d="M0.800 3.600l5.700 3 5.700-3M6.500 6.600v6.300" fill="none" stroke="#c8c8c8" stroke-width="1.100"/></svg>
<svg style="left:555.8px;top:657.5px;" width="14" height="12" viewBox="0 0 14 12"><path d="M0 4h2.800l3.700-3.500v11L2.800 8H0z" fill="#c8c8c8"/><path d="M8.300 3.500a3.500 3.500 0 0 1 0 5M10 1.200a6.500 6.500 0 0 1 0 9.600" fill="none" stroke="#c8c8c8" stroke-width="1.100"/></svg>
<svg style="left:575px;top:657px;" width="13" height="13" viewBox="0 0 13 13"><path d="M0.800 12.200l.7-2.600 5.800-5.800 1.900 1.900-5.800 5.800z" fill="none" stroke="#c8c8c8" stroke-width="1"/><path d="M6.200 2.600l4.200 4.200" stroke="#c8c8c8" stroke-width="1.800"/><path d="M8 4.200l1.700-1.900a1.900 1.900 0 0 1 2.700 2.700l-1.900 1.700z" fill="#c8c8c8"/></svg>
<svg style="left:593px;top:659.3px;" width="14.5" height="7.8" viewBox="0 0 14.5 7.8"><path d="M0 3.900L3.700 0h10.600v7.800H3.700z" fill="#c8c8c8"/><circle cx="5" cy="3.900" r="1.700" fill="#464646"/></svg>
<div class="t" style="left:649.5px;top:654px;line-height:20px;color:#e8e8e8;letter-spacing:-0.35px;">Name</div>
<div style="left:494px;top:672px;width:510.5px;height:131.8px;background:#383838;"></div>
<div style="left:1004.5px;top:672px;width:14.5px;height:292px;background:#2a2a2a;"></div>
<div style="left:1006.9px;top:672.8px;width:10.2px;height:287.5px;background:#4f4f4f;border-radius:5.1px;"></div>
<div style="left:496.3px;top:674.3px;width:17.6px;height:17.4px;background:#2c2c2c;border-radius:2px;"></div>
<div style="left:515.3px;top:674.3px;width:17.6px;height:17.4px;background:#2c2c2c;border-radius:2px;"></div>
<div style="left:534.3px;top:674.3px;width:17.6px;height:17.4px;background:#2c2c2c;border-radius:2px;"></div>
<svg style="left:517.2px;top:678.7px;" width="14" height="9" viewBox="0 0 14 9"><path d="M0.500 4.500C3 0.800 11 0.800 13.500 4.500 11 8.200 3 8.200 0.500 4.500z" fill="none" stroke="#c8c8c8" stroke-width="1.100"/><circle cx="7" cy="4.500" r="2.200" fill="#c8c8c8"/></svg>
<div style="left:573px;top:675px;width:16.2px;height:16px;background:#c8c8c8;border-radius:2.5px;"></div>
<svg style="left:593px;top:679.2px;" width="14.5" height="7.8" viewBox="0 0 14.5 7.8"><path d="M0 3.900L3.700 0h10.600v7.800H3.700z" fill="#c8c8c8"/><circle cx="5" cy="3.900" r="1.700" fill="#383838"/></svg>
<div style="left:610.5px;top:675.4px;width:14.5px;height:15.2px;background:#343434;border-radius:2px;"></div>
<div style="left:626px;top:675.4px;width:15.5px;height:15.2px;background:#343434;border-radius:2px;"></div>
<svg style="left:613.5px;top:681px;" width="9" height="6" viewBox="0 0 9 6"><path d="M0.700 0.800l3.800 3.900 3.800-3.900" fill="none" stroke="#888" stroke-width="1.0"/></svg>
<svg style="left:630.5px;top:679.8px;" width="6.6" height="6.6" viewBox="0 0 6.6 6.6"><circle cx="3.300" cy="3.300" r="3.200" fill="#ddd"/></svg>
<svg style="left:647.9px;top:677px;" width="15" height="12.5" viewBox="0 0 15 12.5"><path d="M0 0.800q0-.8.800-.8h4.200l1.500 1.800H0z" fill="#ddd"/><rect x="0" y="2.300" width="14.500" height="10" rx="1" fill="#ddd"/></svg>
<div class="t" style="left:667px;top:674px;line-height:20px;color:#e8e8e8;letter-spacing:-0.17px;">Graph</div>
<svg style="left:990px;top:677px;" width="12" height="12" viewBox="0 0 12 12"><circle cx="6" cy="6.200" r="4.200" fill="none" stroke="#727272" stroke-width="1.500"/></svg>
<svg style="left:633px;top:693px;" width="12" height="13" viewBox="0 0 12 13"><path d="M1.300 0.800v10.700h9" fill="none" stroke="#ccc" stroke-width="1" stroke-dasharray="1 1"/></svg>
<div class="t" style="left:647.4px;top:696px;line-height:20px;color:#e8e8e8;letter-spacing:-0.2px;">Position.Y</div>
<div style="left:906.7px;top:697px;width:93.6px;height:15.8px;background:#2a2a2a;border-radius:3px;"></div>
<div style="left:990.3px;top:697px;width:10px;height:15.8px;background:#3a3a3a;border-radius:0 3px 3px 0;"></div>
<div class="t" style="left:911.5px;top:695.8px;line-height:20px;color:#7a7a7a;letter-spacing:-0.5px;">Y</div>
<div class="t" style="left:924px;top:695.8px;line-height:20px;color:#e8e8e8;letter-spacing:-0.17px;">-2.0</div>
<svg style="left:978.3px;top:700.8px;" width="8.4" height="8.4" viewBox="0 0 8.4 8.4"><path d="M4.200 0l4.200 4.200-4.200 4.200L0 4.200z" fill="#2fcf74"/></svg>
<svg style="left:992.3px;top:701.5px;" width="6" height="7" viewBox="0 0 6 7"><path d="M0 0h2.500l3.500 3.500-3.500 3.500H0z" fill="#8c8c8c"/></svg>
<div style="left:496.3px;top:718.3px;width:17.6px;height:17.4px;background:#2c2c2c;border-radius:2px;"></div>
<div style="left:515.3px;top:718.3px;width:17.6px;height:17.4px;background:#2c2c2c;border-radius:2px;"></div>
<svg style="left:518.5px;top:721.5px;" width="11" height="11" viewBox="0 0 11 11"><circle cx="5.500" cy="5.500" r="4.600" fill="none" stroke="#ddd" stroke-width="1.100"/><path d="M3 5.500l2 2.200 4.500-5.500" fill="none" stroke="#ddd" stroke-width="1.300"/></svg>
<div style="left:573px;top:719px;width:16.2px;height:16px;background:#f4a571;border-radius:2.5px;"></div>
<svg style="left:593px;top:723.2px;" width="14.5" height="7.8" viewBox="0 0 14.5 7.8"><path d="M0 3.900L3.700 0h10.600v7.800H3.700z" fill="#c8c8c8"/><circle cx="5" cy="3.900" r="1.700" fill="#383838"/></svg>
<svg style="left:665.8px;top:719.5px;" width="16" height="14" viewBox="0 0 16 14"><path d="M0.200 0.800h6M0.200 4h4" stroke="#a8d0f8" stroke-width="1"/><rect x="4.300" y="2.900" width="11.200" height="10.400" fill="#a8d0f8"/></svg>
<div class="t" style="left:671px;top:722px;line-height:11px;font-size:8.500px;font-weight:bold;color:#223;letter-spacing:-0.500px">JS</div>
<div class="t" style="left:686.4px;top:717.7px;line-height:20px;color:#e8e8e8;letter-spacing:-0.17px;">Jsmath [Length]</div>
<div style="left:964.7px;top:719px;width:10px;height:16px;background:#2e2e2e;border-radius:3px 0 0 3px;"></div>
<div style="left:975.3px;top:719px;width:10.6px;height:16px;background:#2e2e2e;border-radius:0 3px 3px 0;"></div>
<svg style="left:966.3px;top:723.7px;" width="7" height="7.2" viewBox="0 0 7 7.2"><path d="M7 0H3.200L0 3.600l3.200 3.600H7z" fill="#d8c070"/></svg>
<svg style="left:976.9px;top:723.7px;" width="7" height="7.2" viewBox="0 0 7 7.2"><path d="M0 0h3.800L7 3.600 3.800 7.200H0z" fill="#c85cf0"/></svg>
<svg style="left:990px;top:721px;" width="12" height="12" viewBox="0 0 12 12"><circle cx="6" cy="6.200" r="4.200" fill="none" stroke="#727272" stroke-width="1.500"/></svg>
<div style="left:496.3px;top:740.3px;width:17.6px;height:17.4px;background:#2c2c2c;border-radius:2px;"></div>
<div style="left:515.3px;top:740.3px;width:17.6px;height:17.4px;background:#2c2c2c;border-radius:2px;"></div>
<div style="left:534.3px;top:740.3px;width:17.6px;height:17.4px;background:#2c2c2c;border-radius:2px;"></div>
<svg style="left:517.2px;top:744.7px;" width="14" height="9" viewBox="0 0 14 9"><path d="M0.500 4.500C3 0.800 11 0.800 13.500 4.500 11 8.200 3 8.200 0.500 4.500z" fill="none" stroke="#c8c8c8" stroke-width="1.100"/><circle cx="7" cy="4.500" r="2.200" fill="#c8c8c8"/></svg>
<div style="left:573px;top:741px;width:16.2px;height:16px;background:#ffe87c;border-radius:2.5px;"></div>
<svg style="left:593px;top:745.2px;" width="14.5" height="7.8" viewBox="0 0 14.5 7.8"><path d="M0 3.900L3.700 0h10.600v7.800H3.700z" fill="#c8c8c8"/><circle cx="5" cy="3.900" r="1.700" fill="#383838"/></svg>
<svg style="left:667.6px;top:743px;" width="13" height="13" viewBox="0 0 13 13"><rect x="0" y="0" width="2" height="2" fill="#f0dc6e"/><rect x="0" y="5.3" width="2" height="2" fill="#f0dc6e"/><rect x="0" y="10.6" width="2" height="2" fill="#f0dc6e"/><rect x="5.2" y="0" width="2" height="2" fill="#f0dc6e"/><rect x="5.2" y="5.3" width="2" height="2" fill="#f0dc6e"/><rect x="5.2" y="10.6" width="2" height="2" fill="#f0dc6e"/><rect x="10.4" y="0" width="2" height="2" fill="#f0dc6e"/><rect x="10.4" y="5.3" width="2" height="2" fill="#f0dc6e"/><rect x="10.4" y="10.6" width="2" height="2" fill="#f0dc6e"/></svg>
<div class="t" style="left:686.4px;top:740px;line-height:20px;color:#e8e8e8;letter-spacing:0.07px;">Duplicator - Horizontal</div>
<div style="left:964.7px;top:741px;width:10px;height:16px;background:#2e2e2e;border-radius:3px 0 0 3px;"></div>
<div style="left:975.3px;top:741px;width:10.6px;height:16px;background:#2e2e2e;border-radius:0 3px 3px 0;"></div>
<svg style="left:966.3px;top:745.7px;" width="7" height="7.2" viewBox="0 0 7 7.2"><path d="M7 0H3.200L0 3.600l3.200 3.600H7z" fill="#d8c070"/></svg>
<svg style="left:976.9px;top:745.7px;" width="7" height="7.2" viewBox="0 0 7 7.2"><path d="M0 0h3.800L7 3.600 3.800 7.200H0z" fill="#c85cf0"/></svg>
<svg style="left:990px;top:743px;" width="12" height="12" viewBox="0 0 12 12"><circle cx="6" cy="6.200" r="4.200" fill="none" stroke="#727272" stroke-width="1.500"/></svg>
<div style="left:496.3px;top:762.3px;width:17.6px;height:17.4px;background:#2c2c2c;border-radius:2px;"></div>
<div style="left:515.3px;top:762.3px;width:17.6px;height:17.4px;background:#2c2c2c;border-radius:2px;"></div>
<div style="left:534.3px;top:762.3px;width:17.6px;height:17.4px;background:#2c2c2c;border-radius:2px;"></div>
<svg style="left:517.2px;top:766.7px;" width="14" height="9" viewBox="0 0 14 9"><path d="M0.500 4.500C3 0.800 11 0.800 13.500 4.500 11 8.200 3 8.200 0.500 4.500z" fill="none" stroke="#c8c8c8" stroke-width="1.100"/><circle cx="7" cy="4.500" r="2.200" fill="#c8c8c8"/></svg>
<div style="left:573px;top:763px;width:16.2px;height:16px;background:#ffe87c;border-radius:2.5px;"></div>
<svg style="left:593px;top:767.2px;" width="14.5" height="7.8" viewBox="0 0 14.5 7.8"><path d="M0 3.900L3.700 0h10.600v7.800H3.700z" fill="#c8c8c8"/><circle cx="5" cy="3.900" r="1.700" fill="#383838"/></svg>
<svg style="left:667.6px;top:765px;" width="13" height="13" viewBox="0 0 13 13"><rect x="0" y="0" width="2" height="2" fill="#f0dc6e"/><rect x="0" y="5.3" width="2" height="2" fill="#f0dc6e"/><rect x="0" y="10.6" width="2" height="2" fill="#f0dc6e"/><rect x="5.2" y="0" width="2" height="2" fill="#f0dc6e"/><rect x="5.2" y="5.3" width="2" height="2" fill="#f0dc6e"/><rect x="5.2" y="10.6" width="2" height="2" fill="#f0dc6e"/><rect x="10.4" y="0" width="2" height="2" fill="#f0dc6e"/><rect x="10.4" y="5.3" width="2" height="2" fill="#f0dc6e"/><rect x="10.4" y="10.6" width="2" height="2" fill="#f0dc6e"/></svg>
<div class="t" style="left:686.4px;top:762px;line-height:20px;color:#e8e8e8;letter-spacing:0.05px;">Duplicator - Vertical</div>
<div style="left:964.7px;top:763px;width:10px;height:16px;background:#2e2e2e;border-radius:3px 0 0 3px;"></div>
<div style="left:975.3px;top:763px;width:10.6px;height:16px;background:#2e2e2e;border-radius:0 3px 3px 0;"></div>
<svg style="left:966.3px;top:767.7px;" width="7" height="7.2" viewBox="0 0 7 7.2"><path d="M7 0H3.200L0 3.600l3.200 3.600H7z" fill="#d8c070"/></svg>
<svg style="left:976.9px;top:767.7px;" width="7" height="7.2" viewBox="0 0 7 7.2"><path d="M0 0h3.800L7 3.600 3.800 7.200H0z" fill="#8c8c8c"/></svg>
<svg style="left:990px;top:765px;" width="12" height="12" viewBox="0 0 12 12"><circle cx="6" cy="6.200" r="4.200" fill="none" stroke="#727272" stroke-width="1.500"/></svg>
<div style="left:496.3px;top:784.3px;width:17.6px;height:17.4px;background:#2c2c2c;border-radius:2px;"></div>
<div style="left:515.3px;top:784.3px;width:17.6px;height:17.4px;background:#2c2c2c;border-radius:2px;"></div>
<div style="left:534.3px;top:784.3px;width:17.6px;height:17.4px;background:#2c2c2c;border-radius:2px;"></div>
<div style="left:573px;top:785px;width:16.2px;height:16px;background:#ffe87c;border-radius:2.5px;"></div>
<svg style="left:593px;top:789.2px;" width="14.5" height="7.8" viewBox="0 0 14.5 7.8"><path d="M0 3.900L3.700 0h10.600v7.800H3.700z" fill="#c8c8c8"/><circle cx="5" cy="3.900" r="1.700" fill="#383838"/></svg>
<svg style="left:666.9px;top:791.5px;" width="15" height="3" viewBox="0 0 15 3"><rect x="0" y="0.500" width="2.100" height="2.100" fill="#f0dc6e"/><rect x="4.400" y="0.700" width="5.800" height="1.500" fill="#eee"/><rect x="12.100" y="0.500" width="2.100" height="2.100" fill="#f0dc6e"/></svg>
<div class="t" style="left:686.4px;top:784px;line-height:20px;color:#8a8a8a;letter-spacing:-0.39px;">Basic Line</div>
<div style="left:964.7px;top:785px;width:10px;height:16px;background:#2e2e2e;border-radius:3px 0 0 3px;"></div>
<div style="left:975.3px;top:785px;width:10.6px;height:16px;background:#2e2e2e;border-radius:0 3px 3px 0;"></div>
<svg style="left:966.3px;top:789.7px;" width="7" height="7.2" viewBox="0 0 7 7.2"><path d="M7 0H3.200L0 3.600l3.200 3.600H7z" fill="#d8c070"/></svg>
<svg style="left:976.9px;top:789.7px;" width="7" height="7.2" viewBox="0 0 7 7.2"><path d="M0 0h3.800L7 3.600 3.800 7.200H0z" fill="#c85cf0"/></svg>
<svg style="left:990px;top:787px;" width="12" height="12" viewBox="0 0 12 12"><circle cx="6" cy="6.200" r="4.200" fill="none" stroke="#727272" stroke-width="1.500"/></svg>
<div style="left:1019px;top:609.3px;width:6.5px;height:20.7px;background:#2a2a2a;"></div>
<div style="left:1019px;top:630px;width:4.3px;height:368px;background:#272727;"></div>
<div style="left:1023.3px;top:630px;width:2.2px;height:368px;background:#1c1c1c;"></div>
<div style="left:917.8px;top:627px;width:102.4px;height:28.8px;border:3px solid #b4e61c;"></div>
<div style="left:897.8px;top:687.8px;width:112.2px;height:33px;border:3px solid #b4e61c;"></div>
<div style="left:494px;top:962px;width:525px;height:14px;background:#333;"></div>
<div style="left:495px;top:964.3px;width:509px;height:9.7px;background:#4a4a4a;border-radius:4.8px;"></div>
<div style="left:494px;top:976px;width:525px;height:22px;background:#464646;"></div>
<div style="left:497.3px;top:978px;width:19.4px;height:18px;background:#2a2a2a;border-radius:4px;border:1px solid #262626;"></div>
<svg style="left:500px;top:983.1px;" width="14.5" height="7.8" viewBox="0 0 14.5 7.8"><path d="M0 3.900L3.700 0h10.600v7.800H3.700z" fill="#ddd"/><circle cx="5" cy="3.900" r="1.700" fill="#2a2a2a"/></svg>
<div style="left:810px;top:978px;width:20px;height:18px;background:#2a2a2a;border-radius:4px;border:1px solid #262626;"></div>
<svg style="left:814.5px;top:981.5px;" width="11" height="11" viewBox="0 0 11 11"><rect x="0.600" y="0.600" width="9.800" height="9.800" fill="none" stroke="#ddd" stroke-width="1.200"/><rect x="4" y="4" width="3" height="3" fill="#ddd"/></svg>
<div style="left:833.3px;top:977.5px;width:182.7px;height:19px;background:#646464;border-radius:4px;"></div>
<div style="left:834.3px;top:978.5px;width:85.7px;height:17px;background:#242424;border-radius:3px;"></div>
<svg style="left:839px;top:982px;" width="11" height="10" viewBox="0 0 11 10"><path d="M0 1h10.500M2.500 5h8M0 9h10.500" stroke="#2fd16f" stroke-width="1.600"/></svg>
<div class="t" style="left:854.5px;top:978.2px;line-height:20px;color:#e8e8e8;letter-spacing:0.01px;">Time Editor</div>
<svg style="left:926px;top:981px;" width="11" height="11" viewBox="0 0 11 11"><path d="M1.500 0v9.500H11" fill="none" stroke="#bbb" stroke-width="1"/><path d="M1.500 9.500L10 3.500" stroke="#bbb" stroke-width="1"/></svg>
<div class="t" style="left:943.5px;top:978.2px;line-height:20px;color:#d8d8d8;letter-spacing:-0.04px;">Graph Editor</div>
<div style="left:1021px;top:806.9px;width:2px;height:2px;background:#9a9a9a;"></div>
<div style="left:1021px;top:809.93px;width:2px;height:2px;background:#9a9a9a;"></div>
<div style="left:1021px;top:812.96px;width:2px;height:2px;background:#9a9a9a;"></div>
<div style="left:1021px;top:815.99px;width:2px;height:2px;background:#9a9a9a;"></div>
<div style="left:1021px;top:819.02px;width:2px;height:2px;background:#9a9a9a;"></div>
<div style="left:1021px;top:822.05px;width:2px;height:2px;background:#9a9a9a;"></div>
<div style="left:494px;top:998px;width:1420px;height:5.5px;background:#111;"></div>
<div style="left:494px;top:1003.8px;width:1420px;height:22.2px;background:#3a3a3a;"></div>
<div style="left:498.1px;top:1010px;width:2px;height:2px;background:#8e8e8e;"></div>
<div style="left:498.1px;top:1014px;width:2px;height:2px;background:#8e8e8e;"></div>
<div style="left:498.1px;top:1018px;width:2px;height:2px;background:#8e8e8e;"></div>
<div style="left:507.2px;top:1006.5px;width:16.8px;height:16.9px;background:#2a2a2a;border-radius:4px;border:1px solid #262626;"></div>
<svg style="left:507.2px;top:1006.5px;" width="17" height="17" viewBox="0 0 17 17"><path d="M2 2.500h11.200v7.800h-2.200v3.200l-3.700-3.200H2z" fill="#e4e4e4"/><path d="M3.800 4.700h1.300M6.200 4.700h5.200M3.800 6.600h1.300M6.200 6.600h5.200M3.800 8.500h1.300M6.200 8.500h5.200" stroke="#2a2a2a" stroke-width="1"/><path d="M16.300 12.500v3.800h-3.800z" fill="#6fcfb0"/></svg>
<div style="left:527.8px;top:1008.1px;width:18.2px;height:13.8px;background:#d9777a;border-radius:2.5px;"></div>
<div class="t" style="left:534.1px;top:1005.6px;line-height:20px;color:#4a1418;font-size:10.5px;letter-spacing:-0.04px;">4</div>
<svg style="left:553.9px;top:1012px;" width="6" height="6" viewBox="0 0 6 6"><circle cx="3" cy="3" r="2.900" fill="#e0747c"/></svg>
<div class="t" style="left:565px;top:1006.2px;line-height:20px;color:#e0e0e0;letter-spacing:-0.24px;">Save reminder: 50 minutes since your last save.</div>
<div class="t" style="left:1349.2px;top:1005.5px;line-height:20px;color:#e8e8e8;letter-spacing:-0.74px;font-style:italic;">Click to see next message</div>
<div style="left:1477px;top:1006.2px;width:80px;height:17.6px;background:#d8bc64;border-radius:2px;"></div>
<div class="t" style="left:1482.5px;top:1006.2px;line-height:20px;color:#1e1e2a;letter-spacing:-0.4px;">Feedback</div>
<div style="left:1560px;top:1006.2px;width:108.8px;height:17.6px;background:#2ecc71;border-radius:2px;"></div>
<div class="t" style="left:1565.5px;top:1006.2px;line-height:20px;color:#1e1e2a;letter-spacing:-0.17px;">Upgrade to Pro</div>
<div style="left:1672px;top:1006.2px;width:130px;height:17.6px;background:#b98cf8;border-radius:2px;"></div>
<div class="t" style="left:1677.5px;top:1006.2px;line-height:20px;color:#1e1e2a;letter-spacing:-0.12px;">New Beta Available</div>
<div style="left:1805px;top:1006.2px;width:106px;height:17.6px;background:#3aa8f2;border-radius:2px;"></div>
<div class="t" style="left:1810.5px;top:1006.2px;line-height:20px;color:#1e1e2a;letter-spacing:-0.25px;">Tips and Tricks</div>
<svg style="left:1538.5px;top:1008.5px;" width="12" height="13" viewBox="0 0 12 13"><path d="M1 0h6l3 3v9.500H1z" fill="#f2f2f2"/><path d="M3.500 11l1-3 5-5 2 2-5 5z" fill="#f08a3c"/><path d="M9 3.500l1.500-1.500 2 2L11 5.500z" fill="#e55"/></svg>
<svg style="left:1649px;top:1009.5px;" width="14" height="11" viewBox="0 0 14 11"><path d="M1 4.500c0-2 1.200-3.500 2.800-3.500s2.700 1 2.700 3v6.500H3.500C2 10.500 1 8.500 1 6.500z" fill="#f7c948"/><path d="M13 4.500c0-2-1.200-3.500-2.800-3.500S7.500 2 7.500 4v6.500h3C12 10.500 13 8.500 13 6.500z" fill="#f7c948"/></svg>
<svg style="left:1783.5px;top:1008px;" width="13" height="14" viewBox="0 0 13 14"><circle cx="6.500" cy="8" r="5.500" fill="#f7c948"/><path d="M3 4.500L7.500 0l2 5.500z" fill="#8a5cd8"/><circle cx="4.500" cy="7.500" r=".8" fill="#543"/><circle cx="8.500" cy="7.500" r=".8" fill="#543"/><path d="M4 10c1.500 1.500 3.500 1.500 5 0" fill="none" stroke="#543" stroke-width=".9"/><circle cx="11" cy="11" r="1.600" fill="#4ac"/></svg>
<svg style="left:1891.5px;top:1008.5px;" width="14" height="13" viewBox="0 0 14 13"><path d="M13.500 0c-4 0-7.500 2-9.500 6l3.500 3.500c4-2 6-5.500 6-9.500z" fill="#eee"/><path d="M4 6L0.500 7 3 4.500zM7.500 9.500L6.500 13 9 10.500z" fill="#e55"/><circle cx="9.500" cy="4" r="1.300" fill="#4ac"/><path d="M1.500 9.500l2.500 2.500-3.500 1z" fill="#f7a83c"/></svg>
<div style="left:1025.5px;top:609.3px;width:888.5px;height:388.7px;background:#2a2a2a;"></div>
<div style="left:1203.5px;top:610.3px;width:705.5px;height:20px;background:#464646;border-radius:5px 5px 0 0;"></div>
<div class="t" style="left:1507.5px;top:610px;line-height:20px;color:#e8e8e8;letter-spacing:-0.05px;">Composition 2</div>
<svg style="left:1186.5px;top:616px;" width="8" height="8" viewBox="0 0 8 8"><path d="M0.500 0.500l7 7M7.500 0.500l-7 7" stroke="#aaa" stroke-width="1"/></svg>
<svg style="left:1892px;top:616px;" width="8" height="8" viewBox="0 0 8 8"><path d="M0.500 0.500l7 7M7.500 0.500l-7 7" stroke="#aaa" stroke-width="1"/></svg>
<div style="left:1025.5px;top:630.5px;width:888.5px;height:23.7px;background:#262626;"></div>
<div style="left:1025.5px;top:654.2px;width:888.5px;height:307.6px;background:#1c1c1c;"></div>
<div style="left:1119.5px;top:654.2px;width:700.7px;height:307.6px;background:#282828;"></div>
<div style="left:1119.5px;top:654.2px;width:700.7px;height:16px;background:#464646;"></div>
<svg style="left:0px;top:600px;" width="1920" height="100" viewBox="0 600 1920 100"><path d="M1119.5 646v8.200" stroke="#c8c8c8" stroke-width="1.200"/><path d="M1127.91 650v4.200" stroke="#9a9a9a" stroke-width="1.200"/><path d="M1136.32 650v4.200" stroke="#9a9a9a" stroke-width="1.200"/><path d="M1144.73 650v4.200" stroke="#9a9a9a" stroke-width="1.200"/><path d="M1153.13 650v4.200" stroke="#9a9a9a" stroke-width="1.200"/><path d="M1161.54 646v8.200" stroke="#c8c8c8" stroke-width="1.200"/><path d="M1169.95 650v4.200" stroke="#9a9a9a" stroke-width="1.200"/><path d="M1178.36 650v4.200" stroke="#9a9a9a" stroke-width="1.200"/><path d="M1186.77 650v4.200" stroke="#9a9a9a" stroke-width="1.200"/><path d="M1195.18 650v4.200" stroke="#9a9a9a" stroke-width="1.200"/><path d="M1203.58 646v8.200" stroke="#c8c8c8" stroke-width="1.200"/><path d="M1211.99 650v4.200" stroke="#9a9a9a" stroke-width="1.200"/><path d="M1220.4 650v4.200" stroke="#9a9a9a" stroke-width="1.200"/><path d="M1228.81 650v4.200" stroke="#9a9a9a" stroke-width="1.200"/><path d="M1237.22 650v4.200" stroke="#9a9a9a" stroke-width="1.200"/><path d="M1245.63 646v8.200" stroke="#c8c8c8" stroke-width="1.200"/><path d="M1254.03 650v4.200" stroke="#9a9a9a" stroke-width="1.200"/><path d="M1262.44 650v4.200" stroke="#9a9a9a" stroke-width="1.200"/><path d="M1270.85 650v4.200" stroke="#9a9a9a" stroke-width="1.200"/><path d="M1279.26 650v4.200" stroke="#9a9a9a" stroke-width="1.200"/><path d="M1287.67 646v8.200" stroke="#c8c8c8" stroke-width="1.200"/><path d="M1296.08 650v4.200" stroke="#9a9a9a" stroke-width="1.200"/><path d="M1304.48 650v4.200" stroke="#9a9a9a" stroke-width="1.200"/><path d="M1312.89 650v4.200" stroke="#9a9a9a" stroke-width="1.200"/><path d="M1321.3 650v4.200" stroke="#9a9a9a" stroke-width="1.200"/><path d="M1329.71 646v8.200" stroke="#c8c8c8" stroke-width="1.200"/><path d="M1338.12 650v4.200" stroke="#9a9a9a" stroke-width="1.200"/><path d="M1346.53 650v4.200" stroke="#9a9a9a" stroke-width="1.200"/><path d="M1354.94 650v4.200" stroke="#9a9a9a" stroke-width="1.200"/><path d="M1363.34 650v4.200" stroke="#9a9a9a" stroke-width="1.200"/><path d="M1371.75 646v8.200" stroke="#c8c8c8" stroke-width="1.200"/><path d="M1380.16 650v4.200" stroke="#9a9a9a" stroke-width="1.200"/><path d="M1388.57 650v4.200" stroke="#9a9a9a" stroke-width="1.200"/><path d="M1396.98 650v4.200" stroke="#9a9a9a" stroke-width="1.200"/><path d="M1405.39 650v4.200" stroke="#9a9a9a" stroke-width="1.200"/><path d="M1413.79 646v8.200" stroke="#c8c8c8" stroke-width="1.200"/><path d="M1422.2 650v4.200" stroke="#9a9a9a" stroke-width="1.200"/><path d="M1430.61 650v4.200" stroke="#9a9a9a" stroke-width="1.200"/><path d="M1439.02 650v4.200" stroke="#9a9a9a" stroke-width="1.200"/><path d="M1447.43 650v4.200" stroke="#9a9a9a" stroke-width="1.200"/><path d="M1455.84 646v8.200" stroke="#c8c8c8" stroke-width="1.200"/><path d="M1464.24 650v4.200" stroke="#9a9a9a" stroke-width="1.200"/><path d="M1472.65 650v4.200" stroke="#9a9a9a" stroke-width="1.200"/><path d="M1481.06 650v4.200" stroke="#9a9a9a" stroke-width="1.200"/><path d="M1489.47 650v4.200" stroke="#9a9a9a" stroke-width="1.200"/><path d="M1497.88 646v8.200" stroke="#c8c8c8" stroke-width="1.200"/><path d="M1506.29 650v4.200" stroke="#9a9a9a" stroke-width="1.200"/><path d="M1514.69 650v4.200" stroke="#9a9a9a" stroke-width="1.200"/><path d="M1523.1 650v4.200" stroke="#9a9a9a" stroke-width="1.200"/><path d="M1531.51 650v4.200" stroke="#9a9a9a" stroke-width="1.200"/><path d="M1539.92 646v8.200" stroke="#c8c8c8" stroke-width="1.200"/><path d="M1548.33 650v4.200" stroke="#9a9a9a" stroke-width="1.200"/><path d="M1556.74 650v4.200" stroke="#9a9a9a" stroke-width="1.200"/><path d="M1565.15 650v4.200" stroke="#9a9a9a" stroke-width="1.200"/><path d="M1573.55 650v4.200" stroke="#9a9a9a" stroke-width="1.200"/><path d="M1581.96 646v8.200" stroke="#c8c8c8" stroke-width="1.200"/><path d="M1590.37 650v4.200" stroke="#9a9a9a" stroke-width="1.200"/><path d="M1598.78 650v4.200" stroke="#9a9a9a" stroke-width="1.200"/><path d="M1607.19 650v4.200" stroke="#9a9a9a" stroke-width="1.200"/><path d="M1615.6 650v4.200" stroke="#9a9a9a" stroke-width="1.200"/><path d="M1624 646v8.200" stroke="#c8c8c8" stroke-width="1.200"/><path d="M1632.41 650v4.200" stroke="#9a9a9a" stroke-width="1.200"/><path d="M1640.82 650v4.200" stroke="#9a9a9a" stroke-width="1.200"/><path d="M1649.23 650v4.200" stroke="#9a9a9a" stroke-width="1.200"/><path d="M1657.64 650v4.200" stroke="#9a9a9a" stroke-width="1.200"/><path d="M1666.05 646v8.200" stroke="#c8c8c8" stroke-width="1.200"/><path d="M1674.45 650v4.200" stroke="#9a9a9a" stroke-width="1.200"/><path d="M1682.86 650v4.200" stroke="#9a9a9a" stroke-width="1.200"/><path d="M1691.27 650v4.200" stroke="#9a9a9a" stroke-width="1.200"/><path d="M1699.68 650v4.200" stroke="#9a9a9a" stroke-width="1.200"/><path d="M1708.09 646v8.200" stroke="#c8c8c8" stroke-width="1.200"/><path d="M1716.5 650v4.200" stroke="#9a9a9a" stroke-width="1.200"/><path d="M1724.9 650v4.200" stroke="#9a9a9a" stroke-width="1.200"/><path d="M1733.31 650v4.200" stroke="#9a9a9a" stroke-width="1.200"/><path d="M1741.72 650v4.200" stroke="#9a9a9a" stroke-width="1.200"/><path d="M1750.13 646v8.200" stroke="#c8c8c8" stroke-width="1.200"/><path d="M1758.54 650v4.200" stroke="#9a9a9a" stroke-width="1.200"/><path d="M1766.95 650v4.200" stroke="#9a9a9a" stroke-width="1.200"/><path d="M1775.36 650v4.200" stroke="#9a9a9a" stroke-width="1.200"/><path d="M1783.76 650v4.200" stroke="#9a9a9a" stroke-width="1.200"/><path d="M1792.17 646v8.200" stroke="#c8c8c8" stroke-width="1.200"/><path d="M1800.58 650v4.200" stroke="#9a9a9a" stroke-width="1.200"/><path d="M1808.99 650v4.200" stroke="#9a9a9a" stroke-width="1.200"/><path d="M1817.4 650v4.200" stroke="#9a9a9a" stroke-width="1.200"/><path d="M1825.81 650v4.200" stroke="#4a4a4a" stroke-width="1.200"/><path d="M1834.21 646v8.200" stroke="#5a5a5a" stroke-width="1.200"/><path d="M1842.62 650v4.200" stroke="#4a4a4a" stroke-width="1.200"/><path d="M1851.03 650v4.200" stroke="#4a4a4a" stroke-width="1.200"/><path d="M1859.44 650v4.200" stroke="#4a4a4a" stroke-width="1.200"/><path d="M1867.85 650v4.200" stroke="#4a4a4a" stroke-width="1.200"/><path d="M1876.26 646v8.200" stroke="#5a5a5a" stroke-width="1.200"/><path d="M1884.66 650v4.200" stroke="#4a4a4a" stroke-width="1.200"/><path d="M1893.07 650v4.200" stroke="#4a4a4a" stroke-width="1.200"/><path d="M1901.48 650v4.200" stroke="#4a4a4a" stroke-width="1.200"/><path d="M1909.89 650v4.200" stroke="#4a4a4a" stroke-width="1.200"/></svg>
<div class="t" style="left:1115.06px;top:628.7px;line-height:20px;color:#e8e8e8;letter-spacing:0.21px;-webkit-text-stroke:0.250px #e8e8e8;">0</div>
<div class="t" style="left:1154.36px;top:628.7px;line-height:20px;color:#e8e8e8;letter-spacing:0.21px;-webkit-text-stroke:0.250px #e8e8e8;">15</div>
<div class="t" style="left:1196.4px;top:628.7px;line-height:20px;color:#e8e8e8;letter-spacing:0.21px;-webkit-text-stroke:0.250px #e8e8e8;">30</div>
<div class="t" style="left:1238.44px;top:628.7px;line-height:20px;color:#e8e8e8;letter-spacing:0.21px;-webkit-text-stroke:0.250px #e8e8e8;">45</div>
<div class="t" style="left:1280.48px;top:628.7px;line-height:20px;color:#e8e8e8;letter-spacing:0.21px;-webkit-text-stroke:0.250px #e8e8e8;">60</div>
<div class="t" style="left:1322.53px;top:628.7px;line-height:20px;color:#e8e8e8;letter-spacing:0.21px;-webkit-text-stroke:0.250px #e8e8e8;">75</div>
<div class="t" style="left:1364.57px;top:628.7px;line-height:20px;color:#e8e8e8;letter-spacing:0.21px;-webkit-text-stroke:0.250px #e8e8e8;">90</div>
<div class="t" style="left:1403.17px;top:628.7px;line-height:20px;color:#e8e8e8;letter-spacing:0.21px;-webkit-text-stroke:0.250px #e8e8e8;">105</div>
<div class="t" style="left:1445.21px;top:628.7px;line-height:20px;color:#e8e8e8;letter-spacing:0.21px;-webkit-text-stroke:0.250px #e8e8e8;">120</div>
<div class="t" style="left:1487.25px;top:628.7px;line-height:20px;color:#e8e8e8;letter-spacing:0.21px;-webkit-text-stroke:0.250px #e8e8e8;">135</div>
<div class="t" style="left:1529.29px;top:628.7px;line-height:20px;color:#e8e8e8;letter-spacing:0.21px;-webkit-text-stroke:0.250px #e8e8e8;">150</div>
<div class="t" style="left:1571.34px;top:628.7px;line-height:20px;color:#e8e8e8;letter-spacing:0.21px;-webkit-text-stroke:0.250px #e8e8e8;">165</div>
<div class="t" style="left:1613.38px;top:628.7px;line-height:20px;color:#e8e8e8;letter-spacing:0.21px;-webkit-text-stroke:0.250px #e8e8e8;">180</div>
<div class="t" style="left:1655.42px;top:628.7px;line-height:20px;color:#e8e8e8;letter-spacing:0.21px;-webkit-text-stroke:0.250px #e8e8e8;">195</div>
<div class="t" style="left:1697.46px;top:628.7px;line-height:20px;color:#e8e8e8;letter-spacing:0.21px;-webkit-text-stroke:0.250px #e8e8e8;">210</div>
<div class="t" style="left:1739.5px;top:628.7px;line-height:20px;color:#e8e8e8;letter-spacing:0.21px;-webkit-text-stroke:0.250px #e8e8e8;">225</div>
<div class="t" style="left:1781.55px;top:628.7px;line-height:20px;color:#e8e8e8;letter-spacing:0.21px;-webkit-text-stroke:0.250px #e8e8e8;">240</div>
<div class="t" style="left:1823.59px;top:628.7px;line-height:20px;color:#555;letter-spacing:0.21px;-webkit-text-stroke:0.250px #555;">255</div>
<div class="t" style="left:1865.63px;top:628.7px;line-height:20px;color:#555;letter-spacing:0.21px;-webkit-text-stroke:0.250px #555;">270</div>
<div style="left:1114.7px;top:653px;width:5px;height:17.8px;background:#6fcfb0;border-radius:1px;"></div>
<div style="left:1820.2px;top:653px;width:5px;height:17.8px;background:#6fcfb0;border-radius:1px;"></div>
<div style="left:1119.7px;top:674.2px;width:700.2px;height:17.5px;background:#c3c3c3;border-radius:3px;"></div>
<div class="t" style="left:1127.8px;top:673.2px;line-height:20px;color:#1e1e1e;letter-spacing:-0.27px;">Graph</div>
<svg style="left:1110px;top:696px;" width="100" height="16" viewBox="0 0 100 16"><path d="M15 7.900h60" stroke="#dcdcdc" stroke-width="1.500"/><path d="M9.500 3.600l4.300 4.300-4.300 4.300-4.300-4.300z" fill="#b4b4b4"/><path d="M9.500 3.600v8.600l-4.300-4.300z" fill="#8a8a8a"/><path d="M79.600 3.600l4.300 4.300-4.300 4.300-4.300-4.300z" fill="#c4c4c4"/><path d="M79.600 3.600v8.600l-4.300-4.300z" fill="#9a9a9a"/></svg>
<div style="left:1119.7px;top:718px;width:700.2px;height:17.5px;background:#f4a873;border-radius:3px;border-radius:0;background:repeating-linear-gradient(135deg,#ffc391 0,#f6ab76 1px,#f4a873 12.400px,#fcb988 13.200px,#d98f5f 13.800px,#e29a6a 24.400px,#ffc391 25.030px);"></div>
<div class="t" style="left:1127.8px;top:717px;line-height:20px;color:#fff;letter-spacing:-0.19px;">Jsmath [Length]</div>
<div style="left:1119.7px;top:740px;width:700.2px;height:17.5px;background:#ffe87c;border-radius:3px;"></div>
<div class="t" style="left:1127.8px;top:739px;line-height:20px;color:#1e1e1e;letter-spacing:0.06px;">Duplicator - Horizontal</div>
<div style="left:1119.7px;top:762px;width:700.2px;height:17.5px;background:#ffe87c;border-radius:3px;"></div>
<div class="t" style="left:1127.8px;top:761px;line-height:20px;color:#1e1e1e;letter-spacing:0.05px;">Duplicator - Vertical</div>
<div style="left:1119.7px;top:784px;width:700.2px;height:17.5px;background:#ffe87c;border-radius:3px;"></div>
<div class="t" style="left:1127.8px;top:783px;line-height:20px;color:#1e1e1e;letter-spacing:-0.39px;">Basic Line</div>
<div style="left:1188.67px;top:652px;width:1.9px;height:309.8px;background:rgba(111,207,176,0.620);"></div>
<svg style="left:1182.37px;top:643.7px;" width="14.4" height="9.5" viewBox="0 0 14.4 9.5"><path d="M0 0h14.400L7.200 9.500z" fill="#6fcfb0"/></svg>
<div style="left:1025.5px;top:961.8px;width:888.5px;height:14.2px;background:#333;"></div>
<div style="left:1027px;top:964px;width:886px;height:10px;background:#4d4d4d;border-radius:5px;"></div>
<div style="left:1025.5px;top:976px;width:888.5px;height:22px;background:#464646;"></div>
<div style="left:1029.7px;top:978.3px;width:16.8px;height:16.8px;background:#2a2a2a;border-radius:4px;border:1px solid #262626;"></div>
<svg style="left:1029.7px;top:978.3px;" width="17" height="17" viewBox="0 0 17 17"><path d="M1.800 3.700h13.700M5.800 8.700h9.700M1.800 13.700h5" stroke="#e4e4e4" stroke-width="1.700"/><path d="M1.800 8.700h2M8.500 13.700h2" stroke="#e4e4e4" stroke-width="1.700"/><path d="M16.300 12.800v3.500h-3.500z" fill="#6fcfb0"/></svg>
<div style="left:1050px;top:979px;width:149.7px;height:15.7px;background:#2a2a2a;border-radius:3px;"></div>
<div class="t" style="left:1052.5px;top:978.2px;line-height:20px;color:#e8e8e8;letter-spacing:-0.12px;">Default Keyframe Layer</div>
<div style="left:1206px;top:979px;width:69.8px;height:15.7px;background:#2a2a2a;border-radius:3px;"></div>
<div class="t" style="left:1210.5px;top:978.2px;line-height:20px;color:#555;letter-spacing:-0.83px;">F</div>
<div class="t" style="left:1222px;top:978.2px;line-height:20px;color:#e8e8e8;">-</div>
<div class="t" style="left:1282px;top:978.2px;line-height:20px;color:#e8e8e8;letter-spacing:-0.05px;">Align:</div>
<div style="left:1318.3px;top:978.7px;width:53px;height:16.6px;background:#2a2a2a;border-radius:4px;"></div>
<div style="left:1335.5px;top:978.7px;width:1px;height:16.6px;background:#464646;"></div>
<div style="left:1353.3px;top:978.7px;width:1px;height:16.6px;background:#464646;"></div>
<svg style="left:1318.3px;top:978.7px;" width="53" height="16.6" viewBox="0 0 53 16.6"><path d="M3 2.500v11.500" stroke="#e4e4e4" stroke-width="1"/><path d="M7.500 6h3.500M5 11h8.500" stroke="#e4e4e4" stroke-width="1.500"/><rect x="4.500" y="5" width="2" height="2" fill="#6fcfb0"/><rect x="4.500" y="10" width="2" height="2" fill="#6fcfb0"/><path d="M26.500 2v12.500" stroke="#e4e4e4" stroke-width="1"/><path d="M21.500 6h3.500M28 6h3.500M20.500 11h4.500M28 11h4.500" stroke="#e4e4e4" stroke-width="1.500"/><rect x="25.500" y="5" width="2" height="2" fill="#6fcfb0"/><rect x="25.500" y="10" width="2" height="2" fill="#6fcfb0"/><path d="M50 2.500v11.500" stroke="#e4e4e4" stroke-width="1"/><path d="M42 6h3.500M39.500 11h8" stroke="#e4e4e4" stroke-width="1.500"/><rect x="46.500" y="5" width="2" height="2" fill="#6fcfb0"/><rect x="46.500" y="10" width="2" height="2" fill="#6fcfb0"/></svg>
<div style="left:1375.8px;top:978.7px;width:16.6px;height:16.6px;background:#2a2a2a;border-radius:4px;border:1px solid #262626;"></div>
<svg style="left:1375.8px;top:978.7px;" width="16.6" height="16.6" viewBox="0 0 16.6 16.6"><rect x="3.300" y="3.300" width="10" height="10" fill="none" stroke="#bbb" stroke-width="1" stroke-dasharray="6 4" stroke-dashoffset="-2"/><g fill="none" stroke="#bbb" stroke-width=".8"><rect x="2" y="2" width="2.400" height="2.400"/><rect x="12.200" y="2" width="2.400" height="2.400"/><rect x="2" y="12.200" width="2.400" height="2.400"/><rect x="12.200" y="12.200" width="2.400" height="2.400"/></g><rect x="7.300" y="7.300" width="2" height="2" fill="#ddd"/></svg>
<div style="left:1396.7px;top:976.7px;width:17.6px;height:19px;background:#2a2a2a;border-radius:4px 0 0 4px;"></div>
<div style="left:1415px;top:976.7px;width:12.5px;height:19px;background:#2a2a2a;border-radius:0 4px 4px 0;"></div>
<svg style="left:1418.25px;top:982.7px;" width="6" height="7" viewBox="0 0 6 7"><path d="M0.500 0.500l5 3-5 3z" fill="#5a5a5a" stroke="#8a8a8a" stroke-width=".8"/></svg>
<svg style="left:1396.7px;top:976.7px;" width="17.6" height="19" viewBox="0 0 17.6 19"><path d="M9 14L5.300 10.300A3.550 3.550 0 0 1 10.300 5.300L14 9" fill="none" stroke="#ddd" stroke-width="2.200"/></svg>
<div style="left:1431.7px;top:976.7px;width:17.6px;height:19px;background:#2a2a2a;border-radius:4px 0 0 4px;"></div>
<div style="left:1450px;top:976.7px;width:12.5px;height:19px;background:#2a2a2a;border-radius:0 4px 4px 0;"></div>
<svg style="left:1453.25px;top:982.7px;" width="6" height="7" viewBox="0 0 6 7"><path d="M0.500 0.500l5 3-5 3z" fill="#5a5a5a" stroke="#8a8a8a" stroke-width=".8"/></svg>
<svg style="left:1433.5px;top:979.5px;" width="14" height="13" viewBox="0 0 14 13"><path d="M0 6.500h3M10.500 6.500H14" stroke="#ddd" stroke-width="1"/><path d="M4.500 0.500v12M7 3.500v6M9 5v3" stroke="#ddd" stroke-width="1.100"/></svg>
<svg style="left:1743px;top:980px;" width="16" height="16" viewBox="0 0 16 16"><circle cx="6.700" cy="6.700" r="5.700" fill="none" stroke="#ddd" stroke-width="1.100"/><path d="M4 6.700h5.400" stroke="#ddd" stroke-width="1.100"/><path d="M11 11l2.500 2.500" stroke="#ddd" stroke-width="1.800"/></svg>
<div style="left:1767px;top:985px;width:115px;height:4px;background:#555;border-radius:2px;"></div>
<svg style="left:1761.5px;top:981.5px;" width="11" height="11" viewBox="0 0 11 11"><circle cx="5.500" cy="5.500" r="5.200" fill="#6fcfb0"/><circle cx="5.500" cy="5.500" r="2" fill="#4aa88c"/></svg>
<svg style="left:1886.5px;top:980px;" width="16" height="16" viewBox="0 0 16 16"><circle cx="6.700" cy="6.700" r="5.700" fill="none" stroke="#ddd" stroke-width="1.100"/><path d="M4 6.700h5.400M6.700 4v5.400" stroke="#ddd" stroke-width="1.100"/><path d="M11 11l2.500 2.500" stroke="#ddd" stroke-width="1.800"/></svg>
<div style="left:866.6px;top:559.7px;width:98.4px;height:18.8px;background:#2e2e2e;border-radius:4px;border:1px solid #262626;"></div>
<div style="left:867.6px;top:560.5px;width:18.2px;height:1px;background:#454545;"></div>
<div style="left:887.3px;top:560.5px;width:18.2px;height:1px;background:#454545;"></div>
<div style="left:907px;top:560.5px;width:18.2px;height:1px;background:#454545;"></div>
<div style="left:926.7px;top:560.5px;width:18.2px;height:1px;background:#454545;"></div>
<div style="left:946.4px;top:560.5px;width:18.2px;height:1px;background:#454545;"></div>
<div style="left:885.8px;top:559.7px;width:1px;height:18.8px;background:#3a3a3a;"></div>
<div style="left:905.5px;top:559.7px;width:1px;height:18.8px;background:#3a3a3a;"></div>
<div style="left:925.5px;top:559.7px;width:1px;height:18.8px;background:#3a3a3a;"></div>
<div style="left:945.4px;top:559.7px;width:1px;height:18.8px;background:#3a3a3a;"></div>
<svg style="left:860px;top:555px;" width="140" height="28" viewBox="0 0 140 28"><rect x="10" y="9.100" width="2.100" height="10" fill="#c8c8c8"/><path d="M13.500 14.100l7.700-5v10z" fill="#c8c8c8"/><path d="M30.300 14.100l7.700-5v10z" fill="#c8c8c8"/><rect x="40.100" y="9.100" width="2.100" height="10" fill="#c8c8c8"/><path d="M50.800 9.100l9 5-9 5z" fill="#c8c8c8"/><rect x="70" y="9.100" width="2.100" height="10" fill="#c8c8c8"/><path d="M74 9.100l7.700 5-7.700 5z" fill="#c8c8c8"/><path d="M90.800 9.100l7.700 5-7.700 5z" fill="#c8c8c8"/><rect x="100" y="9.100" width="2.100" height="10" fill="#c8c8c8"/></svg>
<div style="left:971.6px;top:559.7px;width:18.7px;height:18.8px;background:#2e2e2e;border-radius:4px;border:1px solid #262626;"></div>
<svg style="left:971.6px;top:559.5px;" width="19" height="19" viewBox="0 0 19 19"><path d="M9 7.200H3.800q-1.200 0-1.200 1.200v4.200q0 1.200 1.200 1.200h11q1.200 0 1.200-1.200V9" fill="none" stroke="#c8c8c8" stroke-width="1.300"/><path d="M9.800 3.800l4.900 2.700-4.900 2.600z" fill="#c8c8c8"/></svg>
<div style="left:1232.2px;top:560.2px;width:36.6px;height:17.5px;background:#333;border-radius:3px;"></div>
<svg style="left:1233.2px;top:565.1px;" width="14.5" height="7.8" viewBox="0 0 14.5 7.8"><path d="M0 3.900L3.700 0h10.600v7.800H3.700z" fill="#d0d0d0"/><circle cx="5" cy="3.900" r="1.700" fill="#333"/></svg>
<div class="t" style="left:1258.2px;top:560.2px;line-height:20px;color:#9a9a9a;letter-spacing:0.13px;">0</div>
<div style="left:1272.3px;top:559.5px;width:18.3px;height:19px;background:#2a2a2a;border-radius:4px 0 0 4px;border:1px solid #2c2c2c;border-right:none;"></div>
<div style="left:1291.2px;top:559.5px;width:11.7px;height:19px;background:#2e2e2e;border-radius:0 4px 4px 0;border:1px solid #2c2c2c;border-left:none;"></div>
<svg style="left:1293.85px;top:565.5px;" width="6.5" height="7" viewBox="0 0 6.5 7"><path d="M0.600 0.600l5 2.900-5 2.900z" fill="#555" stroke="#8a8a8a" stroke-width=".8"/></svg>
<svg style="left:1272.3px;top:559.5px;" width="18.3" height="19" viewBox="0 0 18.3 19"><path d="M3.500 7.200h3l4-3.700v12l-4-3.700h-3z" fill="#2fcf6f"/><path d="M12.300 6.500a4.500 4.500 0 0 1 0 6M14.300 4a8 8 0 0 1 0 11" fill="none" stroke="#2fcf6f" stroke-width="1.300"/></svg>
<div style="left:1307.5px;top:559.5px;width:18.3px;height:19px;background:#444;border-radius:4px 0 0 4px;border:1px solid #2c2c2c;border-right:none;"></div>
<div style="left:1326.4px;top:559.5px;width:11.7px;height:19px;background:#2e2e2e;border-radius:0 4px 4px 0;border:1px solid #2c2c2c;border-left:none;"></div>
<svg style="left:1329.05px;top:565.5px;" width="6.5" height="7" viewBox="0 0 6.5 7"><path d="M0.600 0.600l5 2.900-5 2.900z" fill="#555" stroke="#8a8a8a" stroke-width=".8"/></svg>
<svg style="left:1307.5px;top:559.5px;" width="18.3" height="19" viewBox="0 0 18.3 19"><path d="M9.300 14.200L5.600 10.500A3.550 3.550 0 0 1 10.600 5.500L14.300 9.200" fill="none" stroke="#ddd" stroke-width="2.200"/></svg>
<div style="left:1342.8px;top:559.5px;width:18.3px;height:19px;background:#444;border-radius:4px 0 0 4px;border:1px solid #2c2c2c;border-right:none;"></div>
<div style="left:1361.7px;top:559.5px;width:11.7px;height:19px;background:#2e2e2e;border-radius:0 4px 4px 0;border:1px solid #2c2c2c;border-left:none;"></div>
<svg style="left:1364.35px;top:565.5px;" width="6.5" height="7" viewBox="0 0 6.5 7"><path d="M0.600 0.600l5 2.900-5 2.900z" fill="#555" stroke="#8a8a8a" stroke-width=".8"/></svg>
<svg style="left:1342.8px;top:559.5px;" width="18.3" height="19" viewBox="0 0 18.3 19"><path d="M6.700 3v13M11.700 3v13M2.500 7h13.500M2.500 12h13.500" stroke="#e4e4e4" stroke-width="1.200"/></svg>
<div style="left:1377.3px;top:559.5px;width:19.4px;height:19px;background:#242424;border-radius:4px;border:1px solid #2c2c2c;"></div>
<svg style="left:1377.3px;top:559.5px;" width="19.4" height="19" viewBox="0 0 19.4 19"><rect x="3" y="3.500" width="3.500" height="3.300" fill="#2fcf6f"/><rect x="3" y="8.200" width="3.500" height="7.500" fill="#2fcf6f"/><rect x="8.500" y="4.100" width="8" height="5" fill="none" stroke="#2fcf6f" stroke-width="1.300"/><rect x="7.900" y="11.700" width="9.300" height="4" fill="#2fcf6f"/></svg>
<div style="left:1400.2px;top:559.5px;width:19.4px;height:19px;background:#2e2e2e;border-radius:4px;border:1px solid #2c2c2c;"></div>
<svg style="left:1400.2px;top:559.5px;" width="19.4" height="19" viewBox="0 0 19.4 19"><path d="M3.500 5l5 4.500-5 4.500z" fill="#c8c8c8"/><path d="M8.500 5l4.500 4.500-4.500 4.500M12 5l4.500 4.500-4.500 4.500" fill="none" stroke="#c8c8c8" stroke-width="1.500"/></svg>
<div style="left:1423.3px;top:559.5px;width:18.3px;height:19px;background:#444;border-radius:4px 0 0 4px;border:1px solid #2c2c2c;border-right:none;"></div>
<div style="left:1442.2px;top:559.5px;width:11.7px;height:19px;background:#2e2e2e;border-radius:0 4px 4px 0;border:1px solid #2c2c2c;border-left:none;"></div>
<svg style="left:1444.85px;top:565.5px;" width="6.5" height="7" viewBox="0 0 6.5 7"><path d="M0.600 0.600l5 2.900-5 2.900z" fill="#555" stroke="#8a8a8a" stroke-width=".8"/></svg>
<svg style="left:1423.3px;top:559.5px;" width="18.3" height="19" viewBox="0 0 18.3 19"><rect x="3.300" y="4.300" width="12" height="8" fill="none" stroke="#ddd" stroke-width="1.300"/><rect x="2.700" y="13" width="13.200" height="2" fill="#ddd"/></svg>
<div style="left:1458.2px;top:559.5px;width:18.3px;height:19px;background:#444;border-radius:4px 0 0 4px;border:1px solid #2c2c2c;border-right:none;"></div>
<div style="left:1477.1px;top:559.5px;width:11.7px;height:19px;background:#2e2e2e;border-radius:0 4px 4px 0;border:1px solid #2c2c2c;border-left:none;"></div>
<svg style="left:1479.75px;top:565.5px;" width="6.5" height="7" viewBox="0 0 6.5 7"><path d="M0.600 0.600l5 2.900-5 2.900z" fill="#555" stroke="#8a8a8a" stroke-width=".8"/></svg>
<svg style="left:1458.2px;top:559.5px;" width="18.3" height="19" viewBox="0 0 18.3 19"><rect x="3" y="3.500" width="7.500" height="5" fill="none" stroke="#ccc" stroke-width="1.100"/><path d="M12.500 6.500v4.500H5.500M14.500 9v4.500H8.500M16.500 11.500v4h-6" fill="none" stroke="#aaa" stroke-width="1"/></svg>
<div style="left:1493.3px;top:559.5px;width:18.3px;height:19px;background:#444;border-radius:4px 0 0 4px;border:1px solid #2c2c2c;border-right:none;"></div>
<div style="left:1512.2px;top:559.5px;width:11.7px;height:19px;background:#2e2e2e;border-radius:0 4px 4px 0;border:1px solid #2c2c2c;border-left:none;"></div>
<svg style="left:1514.85px;top:565.5px;" width="6.5" height="7" viewBox="0 0 6.5 7"><path d="M0.600 0.600l5 2.900-5 2.900z" fill="#555" stroke="#8a8a8a" stroke-width=".8"/></svg>
<svg style="left:1493.3px;top:559.5px;" width="18.3" height="19" viewBox="0 0 18.3 19"><rect x="2.500" y="3" width="8.500" height="8.500" fill="#ddd"/><rect x="7.500" y="8" width="8" height="8" fill="#444" stroke="#eee" stroke-width="1.200"/></svg>
<div style="left:1528.2px;top:559.5px;width:18.3px;height:19px;background:#2a2a2a;border-radius:4px 0 0 4px;border:1px solid #2c2c2c;border-right:none;"></div>
<div style="left:1547.1px;top:559.5px;width:11.7px;height:19px;background:#2e2e2e;border-radius:0 4px 4px 0;border:1px solid #2c2c2c;border-left:none;"></div>
<svg style="left:1549.75px;top:565.5px;" width="6.5" height="7" viewBox="0 0 6.5 7"><path d="M0.600 0.600l5 2.900-5 2.900z" fill="#555" stroke="#8a8a8a" stroke-width=".8"/></svg>
<svg style="left:1528.2px;top:559.5px;" width="18.3" height="19" viewBox="0 0 18.3 19"><rect x="3.3" y="3.8" width="2.500" height="2.500" fill="#2fcf6f"/><rect x="3.3" y="8.8" width="2.500" height="2.500" fill="#2fcf6f"/><rect x="3.3" y="13.8" width="2.500" height="2.500" fill="#2fcf6f"/><rect x="5.8" y="6.3" width="2.500" height="2.500" fill="#2fcf6f"/><rect x="5.8" y="11.3" width="2.500" height="2.500" fill="#2fcf6f"/><rect x="8.3" y="3.8" width="2.500" height="2.500" fill="#2fcf6f"/><rect x="8.3" y="8.8" width="2.500" height="2.500" fill="#2fcf6f"/><rect x="8.3" y="13.8" width="2.500" height="2.500" fill="#2fcf6f"/><rect x="10.8" y="6.3" width="2.500" height="2.500" fill="#2fcf6f"/><rect x="10.8" y="11.3" width="2.500" height="2.500" fill="#2fcf6f"/><rect x="13.3" y="3.8" width="2.500" height="2.500" fill="#2fcf6f"/><rect x="13.3" y="8.8" width="2.500" height="2.500" fill="#2fcf6f"/><rect x="13.3" y="13.8" width="2.500" height="2.500" fill="#2fcf6f"/></svg>
<div style="left:1563.3px;top:559.5px;width:19.4px;height:19px;background:#2e2e2e;border-radius:4px;border:1px solid #2c2c2c;"></div>
<svg style="left:1563.3px;top:559.5px;" width="19.4" height="19" viewBox="0 0 19.4 19"><polygon points="14.4,7.81 16.34,8.02 16.34,10.98 14.4,11.19 14.22,11.63 15.44,13.14 13.34,15.24 11.83,14.02 11.39,14.2 11.18,16.14 8.22,16.14 8.01,14.2 7.57,14.02 6.06,15.24 3.96,13.14 5.18,11.63 5,11.19 3.06,10.98 3.06,8.02 5,7.81 5.18,7.37 3.96,5.86 6.06,3.76 7.57,4.98 8.01,4.8 8.22,2.86 11.18,2.86 11.39,4.8 11.83,4.98 13.34,3.76 15.44,5.86 14.22,7.37" fill="#e4e4e4"/><circle cx="9.7" cy="9.5" r="2.3" fill="#2e2e2e"/></svg>
</body></html>
